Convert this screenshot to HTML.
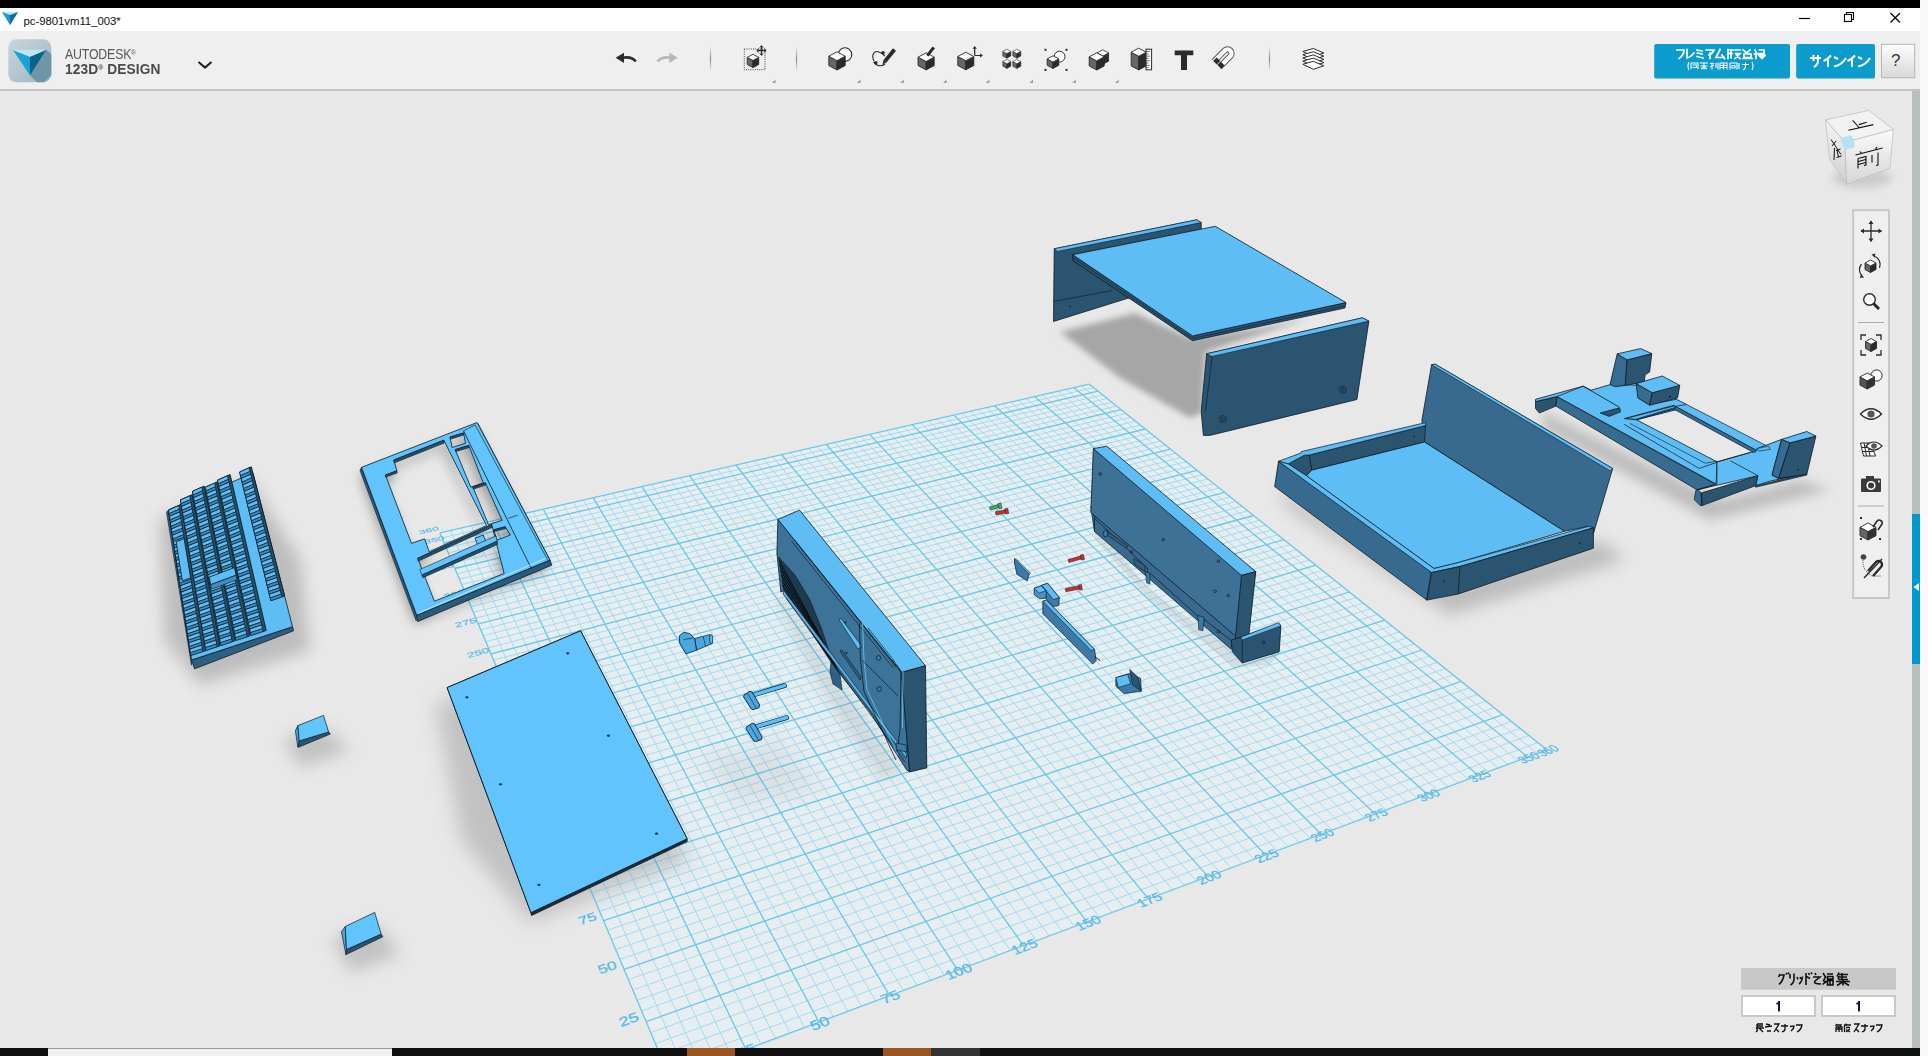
<!DOCTYPE html>
<html><head><meta charset="utf-8">
<style>
*{margin:0;padding:0;box-sizing:border-box}
html,body{width:1928px;height:1056px;overflow:hidden;background:#f8f8f8;font-family:"Liberation Sans",sans-serif}
.abs{position:absolute}
#topbar{left:0;top:0;width:1920px;height:8px;background:#000}
#title{left:0;top:8px;width:1920px;height:23px;background:#fff}
#tb{left:0;top:31px;width:1920px;height:60px;background:#efefef;border-bottom:2px solid #c4c4c4}
#vp{left:0;top:91px;width:1912px;height:957px;background:#e8e8e8;overflow:hidden}
#strip{left:1912px;top:91px;width:8px;height:957px;background:#b8c0bf}
#taskbar{left:0;top:1048px;width:1920px;height:8px;background:#111}
.txt{white-space:nowrap}
</style></head><body>
<div class="abs" id="topbar"></div>
<div class="abs" id="title">
  <svg class="abs" style="left:0;top:0" width="20" height="23" viewBox="0 0 20 23">
    <polygon points="2,4 18,4 10,17" fill="#1a9ad0"/>
    <polygon points="10,7 18,4 10,17" fill="#0f6f9a"/>
    <polygon points="2,4 18,4 10,7" fill="#bfe6f5"/>
  </svg>
  <div class="abs txt" style="left:23.5px;top:5.5px;font-size:11.4px;line-height:14px;color:#111;letter-spacing:-0.05px;">pc-9801vm11_003*</div>
  <svg class="abs" style="left:1780px;top:0" width="140" height="23" viewBox="1780 0 140 23">
    <line x1="1799" y1="10.5" x2="1810" y2="10.5" stroke="#000" stroke-width="1.2"/>
    <rect x="1844.5" y="6.5" width="7" height="7" fill="none" stroke="#000" stroke-width="1.1"/>
    <path d="M1846.5 6.5 V4.5 H1853.5 V11.5 H1851.5" fill="none" stroke="#000" stroke-width="1.1"/>
    <path d="M1890.5 5 L1900 14.5 M1900 5 L1890.5 14.5" stroke="#000" stroke-width="1.2"/>
  </svg>
</div>
<div class="abs" id="tb">
<svg class="abs" style="left:0;top:0" width="1920" height="60" viewBox="0 31 1920 60">
<defs><linearGradient id="lg1" x1="0" y1="0" x2="1" y2="1"><stop offset="0" stop-color="#c9d6dc"/><stop offset="1" stop-color="#9fb5c0"/></linearGradient>
    <linearGradient id="sepg" x1="0" y1="0" x2="0" y2="1"><stop offset="0" stop-color="#efefef"/><stop offset="0.5" stop-color="#8a8a8a"/><stop offset="1" stop-color="#efefef"/></linearGradient>
    <linearGradient id="helpg" x1="0" y1="0" x2="0" y2="1"><stop offset="0" stop-color="#fdfdfd"/><stop offset="1" stop-color="#d8d8d8"/></linearGradient></defs>
<rect x="8.3" y="39.3" width="43" height="43" rx="8" fill="url(#lg1)"/>
<polygon points="30,75.5 46.3,49.7 51.3,54 51.3,75 44,82.3 37,82.3" fill="#6f96a8"/>
<polygon points="13,50 30,56.8 30,75.5" fill="#17a3d8"/>
<polygon points="30,56.8 46.3,49.7 30,75.5" fill="#0c6388"/>
<polygon points="13,50 46.3,49.7 30,56.8" fill="#bde6f5"/>
<path d="M198.5 62 L205 67.5 L211.5 62" fill="none" stroke="#222" stroke-width="2.2"/>
<path d="M615.6 57.8 L624 52.8 L624 62.9 Z" fill="#2b2b2b"/><path d="M622 57.8 Q632 56 635.8 61.5" fill="none" stroke="#2b2b2b" stroke-width="2.6"/>
<path d="M677.8 57.8 L669.4 52.8 L669.4 62.9 Z" fill="#b8b8b8"/><path d="M671.4 57.8 Q661.4 56 657.6 61.5" fill="none" stroke="#b8b8b8" stroke-width="2.6"/>
<rect x="709.9" y="46.5" width="1.2" height="25" fill="url(#sepg)"/>
<rect x="795.9" y="46.5" width="1.2" height="25" fill="url(#sepg)"/>
<rect x="1268.9" y="46.5" width="1.2" height="25" fill="url(#sepg)"/>
<rect x="744.3" y="49" width="20.7" height="20.7" fill="none" stroke="#333" stroke-width="0.9" stroke-dasharray="1,1.2"/>
<polygon points="747.2,57.4 753.0,60.5 753.0,67.6 747.2,64.5" fill="#666" stroke="#2b2b2b" stroke-width="0.9" stroke-linejoin="round"/><polygon points="753.0,60.5 758.7,57.4 758.7,64.5 753.0,67.6" fill="#2b2b2b" stroke="#2b2b2b" stroke-width="0.9" stroke-linejoin="round"/><polygon points="747.2,57.4 753.0,54.3 758.7,57.4 753.0,60.5" fill="#fff" stroke="#2b2b2b" stroke-width="0.9" stroke-linejoin="round"/>
<path d="M761.5 46 V55 M757.2 50.5 H765.8" stroke="#2b2b2b" stroke-width="1.3"/><path d="M759.8 47.6 L761.5 45.6 L763.2 47.6 M759.8 53.4 L761.5 55.4 L763.2 53.4 M758.8 48.8 L756.8 50.5 L758.8 52.2 M764.2 48.8 L766.2 50.5 L764.2 52.2" fill="none" stroke="#2b2b2b" stroke-width="1"/>
<circle cx="845" cy="54.6" r="6.8" fill="#fff" stroke="#2b2b2b" stroke-width="1.1"/>
<polygon points="828.8,56.2 837.0,60.7 837.0,70.0 828.8,65.6" fill="#666" stroke="#2b2b2b" stroke-width="0.9" stroke-linejoin="round"/><polygon points="837.0,60.7 845.2,56.2 845.2,65.6 837.0,70.0" fill="#2b2b2b" stroke="#2b2b2b" stroke-width="0.9" stroke-linejoin="round"/><polygon points="828.8,56.2 837.0,51.8 845.2,56.2 837.0,60.7" fill="#fff" stroke="#2b2b2b" stroke-width="0.9" stroke-linejoin="round"/>
<path d="M874 61 C871 55 874 50 879 52 C882 53 884 55 885 56" fill="none" stroke="#2b2b2b" stroke-width="1.1"/><path d="M873.5 62 C876 66 881 67 885 64" fill="none" stroke="#2b2b2b" stroke-width="1.1"/>
<circle cx="883" cy="52.8" r="1.8" fill="#2b2b2b"/><circle cx="875.8" cy="62.8" r="1.8" fill="#2b2b2b"/>
<polygon points="893,48.2 896,50.8 886.5,62.5 883.5,60" fill="#2b2b2b"/><polygon points="883.5,60 886.5,62.5 882.5,64.5" fill="#2b2b2b"/>
<polygon points="918.0,57.2 926.1,61.5 926.1,69.9 918.0,65.5" fill="#666" stroke="#2b2b2b" stroke-width="0.9" stroke-linejoin="round"/><polygon points="926.1,61.5 934.2,57.2 934.2,65.5 926.1,69.9" fill="#2b2b2b" stroke="#2b2b2b" stroke-width="0.9" stroke-linejoin="round"/><polygon points="918.0,57.2 926.1,52.8 934.2,57.2 926.1,61.5" fill="#fff" stroke="#2b2b2b" stroke-width="0.9" stroke-linejoin="round"/>
<polygon points="932.5,46.5 935,48.3 928.5,56.5 926.2,54.8" fill="#2b2b2b"/>
<polygon points="957.8,56.5 965.8,60.8 965.8,69.8 957.8,65.5" fill="#666" stroke="#2b2b2b" stroke-width="0.9" stroke-linejoin="round"/><polygon points="965.8,60.8 973.8,56.5 973.8,65.5 965.8,69.8" fill="#2b2b2b" stroke="#2b2b2b" stroke-width="0.9" stroke-linejoin="round"/><polygon points="957.8,56.5 965.8,52.2 973.8,56.5 965.8,60.8" fill="#fff" stroke="#2b2b2b" stroke-width="0.9" stroke-linejoin="round"/>
<path d="M974.7 55.5 V47.5 M974.7 55.5 H981" stroke="#2b2b2b" stroke-width="1.2"/><polygon points="972.6,48.8 974.7,46 976.8,48.8" fill="#2b2b2b"/><polygon points="980,53.4 983,55.5 980,57.6" fill="#2b2b2b"/>
<polygon points="1002.8,51.4 1006.8,53.5 1006.8,58.2 1002.8,56.0" fill="#666" stroke="#2b2b2b" stroke-width="0.6" stroke-linejoin="round"/><polygon points="1006.8,53.5 1010.8,51.4 1010.8,56.0 1006.8,58.2" fill="#2b2b2b" stroke="#2b2b2b" stroke-width="0.6" stroke-linejoin="round"/><polygon points="1002.8,51.4 1006.8,49.2 1010.8,51.4 1006.8,53.5" fill="#fff" stroke="#2b2b2b" stroke-width="0.6" stroke-linejoin="round"/>
<polygon points="1012.8,51.4 1016.8,53.5 1016.8,58.2 1012.8,56.0" fill="#666" stroke="#2b2b2b" stroke-width="0.6" stroke-linejoin="round"/><polygon points="1016.8,53.5 1020.8,51.4 1020.8,56.0 1016.8,58.2" fill="#2b2b2b" stroke="#2b2b2b" stroke-width="0.6" stroke-linejoin="round"/><polygon points="1012.8,51.4 1016.8,49.2 1020.8,51.4 1016.8,53.5" fill="#fff" stroke="#2b2b2b" stroke-width="0.6" stroke-linejoin="round"/>
<polygon points="1002.8,61.6 1006.8,63.7 1006.8,68.4 1002.8,66.2" fill="#666" stroke="#2b2b2b" stroke-width="0.6" stroke-linejoin="round"/><polygon points="1006.8,63.7 1010.8,61.6 1010.8,66.2 1006.8,68.4" fill="#2b2b2b" stroke="#2b2b2b" stroke-width="0.6" stroke-linejoin="round"/><polygon points="1002.8,61.6 1006.8,59.4 1010.8,61.6 1006.8,63.7" fill="#fff" stroke="#2b2b2b" stroke-width="0.6" stroke-linejoin="round"/>
<polygon points="1012.8,61.6 1016.8,63.7 1016.8,68.4 1012.8,66.2" fill="#666" stroke="#2b2b2b" stroke-width="0.6" stroke-linejoin="round"/><polygon points="1016.8,63.7 1020.8,61.6 1020.8,66.2 1016.8,68.4" fill="#2b2b2b" stroke="#2b2b2b" stroke-width="0.6" stroke-linejoin="round"/><polygon points="1012.8,61.6 1016.8,59.4 1020.8,61.6 1016.8,63.7" fill="#fff" stroke="#2b2b2b" stroke-width="0.6" stroke-linejoin="round"/>
<rect x="1044.5" y="48.8" width="2" height="2" fill="#2b2b2b"/>
<rect x="1065.5" y="48.8" width="2" height="2" fill="#2b2b2b"/>
<rect x="1044.5" y="68.9" width="2" height="2" fill="#2b2b2b"/>
<rect x="1065.5" y="68.9" width="2" height="2" fill="#2b2b2b"/>
<circle cx="1059.6" cy="56.6" r="5.4" fill="#fff" stroke="#2b2b2b" stroke-width="1"/>
<polygon points="1047.2,58.9 1053.0,62.1 1053.0,68.4 1047.2,65.3" fill="#666" stroke="#2b2b2b" stroke-width="0.9" stroke-linejoin="round"/><polygon points="1053.0,62.1 1058.8,58.9 1058.8,65.3 1053.0,68.4" fill="#2b2b2b" stroke="#2b2b2b" stroke-width="0.9" stroke-linejoin="round"/><polygon points="1047.2,58.9 1053.0,55.8 1058.8,58.9 1053.0,62.1" fill="#fff" stroke="#2b2b2b" stroke-width="0.9" stroke-linejoin="round"/>
<polygon points="1097.0,52.9 1102.8,56.1 1102.8,64.3 1097.0,61.2" fill="#666" stroke="#2b2b2b" stroke-width="0.8" stroke-linejoin="round"/><polygon points="1102.8,56.1 1108.6,52.9 1108.6,61.2 1102.8,64.3" fill="#2b2b2b" stroke="#2b2b2b" stroke-width="0.8" stroke-linejoin="round"/><polygon points="1097.0,52.9 1102.8,49.8 1108.6,52.9 1102.8,56.1" fill="#fff" stroke="#2b2b2b" stroke-width="0.8" stroke-linejoin="round"/>
<polygon points="1089.2,56.8 1096.7,60.9 1096.7,70.0 1089.2,66.0" fill="#666" stroke="#2b2b2b" stroke-width="0.9" stroke-linejoin="round"/><polygon points="1096.7,60.9 1104.2,56.8 1104.2,66.0 1096.7,70.0" fill="#2b2b2b" stroke="#2b2b2b" stroke-width="0.9" stroke-linejoin="round"/><polygon points="1089.2,56.8 1096.7,52.8 1104.2,56.8 1096.7,60.9" fill="#fff" stroke="#2b2b2b" stroke-width="0.9" stroke-linejoin="round"/>
<polygon points="1131.2,52.2 1138.7,56.3 1138.7,69.9 1131.2,65.9" fill="#666" stroke="#2b2b2b" stroke-width="0.9" stroke-linejoin="round"/><polygon points="1138.7,56.3 1146.2,52.2 1146.2,65.9 1138.7,69.9" fill="#2b2b2b" stroke="#2b2b2b" stroke-width="0.9" stroke-linejoin="round"/><polygon points="1131.2,52.2 1138.7,48.2 1146.2,52.2 1138.7,56.3" fill="#fff" stroke="#2b2b2b" stroke-width="0.9" stroke-linejoin="round"/>
<rect x="1146" y="49.2" width="5.6" height="20.6" fill="#fff" stroke="#2b2b2b" stroke-width="1"/>
<line x1="1146" y1="51.5" x2="1149.8" y2="51.5" stroke="#2b2b2b" stroke-width="0.7"/>
<line x1="1146" y1="53.8" x2="1148.6" y2="53.8" stroke="#2b2b2b" stroke-width="0.7"/>
<line x1="1146" y1="56.1" x2="1149.8" y2="56.1" stroke="#2b2b2b" stroke-width="0.7"/>
<line x1="1146" y1="58.4" x2="1148.6" y2="58.4" stroke="#2b2b2b" stroke-width="0.7"/>
<line x1="1146" y1="60.7" x2="1149.8" y2="60.7" stroke="#2b2b2b" stroke-width="0.7"/>
<line x1="1146" y1="63.0" x2="1148.6" y2="63.0" stroke="#2b2b2b" stroke-width="0.7"/>
<line x1="1146" y1="65.3" x2="1149.8" y2="65.3" stroke="#2b2b2b" stroke-width="0.7"/>
<line x1="1146" y1="67.6" x2="1148.6" y2="67.6" stroke="#2b2b2b" stroke-width="0.7"/>
<polygon points="1174.7,50.5 1193.3,50.5 1193.3,55.2 1187,55.2 1187,70 1181,70 1181,55.2 1174.7,55.2" fill="#2b2b2b"/>
<path d="M1219.5 67 L1230.5 56 A4 4 0 0 0 1224.8 50.4 L1213.8 61.4" fill="none" stroke="#555" stroke-width="6.2" stroke-linecap="butt"/>
<path d="M1219.5 67 L1230.5 56 A4 4 0 0 0 1224.8 50.4 L1213.8 61.4" fill="none" stroke="#fff" stroke-width="4.2"/>
<polygon points="1212.2,59.8 1215.6,56.4 1219.2,60 1215.8,63.4" fill="#2b2b2b" transform="translate(1,1)"/><polygon points="1218,65.6 1221.4,62.2 1225,65.8 1221.6,69.2" fill="#2b2b2b" transform="translate(-0.5,-0.5)"/>
<polygon points="1302.8,51.5 1313.3,48.5 1323.8,53.0 1313.3,56.5" fill="#fff" stroke="#2b2b2b" stroke-width="1"/>
<polygon points="1302.8,54.7 1313.3,51.7 1323.8,56.2 1313.3,59.7" fill="#fff" stroke="#2b2b2b" stroke-width="1"/>
<polygon points="1302.8,57.9 1313.3,54.9 1323.8,59.4 1313.3,62.9" fill="#fff" stroke="#2b2b2b" stroke-width="1"/>
<polygon points="1302.8,61.1 1313.3,58.1 1323.8,62.6 1313.3,66.1" fill="#fff" stroke="#2b2b2b" stroke-width="1"/>
<polygon points="1302.8,64.3 1313.3,61.3 1323.8,65.8 1313.3,69.3" fill="#fff" stroke="#2b2b2b" stroke-width="1"/>
<polygon points="772,83 775.5,83 775.5,79.5" fill="#9a9a9a"/>
<polygon points="857,83 860.5,83 860.5,79.5" fill="#9a9a9a"/>
<polygon points="900.3,83 903.8,83 903.8,79.5" fill="#9a9a9a"/>
<polygon points="943.1,83 946.6,83 946.6,79.5" fill="#9a9a9a"/>
<polygon points="985.9,83 989.4,83 989.4,79.5" fill="#9a9a9a"/>
<polygon points="1029.5,83 1033.0,83 1033.0,79.5" fill="#9a9a9a"/>
<polygon points="1072.3,83 1075.8,83 1075.8,79.5" fill="#9a9a9a"/>
<polygon points="1115.1,83 1118.6,83 1118.6,79.5" fill="#9a9a9a"/>
<rect x="1654.2" y="44.1" width="135.8" height="34.4" rx="2" fill="#0b9bcd"/>
<rect x="1796.2" y="44.1" width="78.8" height="34.4" rx="2" fill="#0b9bcd"/>
<rect x="1881.5" y="44.3" width="33.2" height="33.4" fill="url(#helpg)" stroke="#b4b4b4" stroke-width="1"/>
</svg>
<div class="abs txt" style="left:64.5px;top:14.5px;font-size:14.2px;line-height:16px;color:#585858;transform:scaleX(0.87);transform-origin:0 0;letter-spacing:-0.2px">AUTODESK<span style="font-size:7px;vertical-align:top;position:relative;top:-1px">&#174;</span></div>
<div class="abs txt" style="left:64.5px;top:30px;font-size:14px;line-height:16px;color:#4a4a4a;font-weight:bold;letter-spacing:0.1px;transform:scaleX(0.98);transform-origin:0 0">123D<span style="font-size:7px;vertical-align:top;position:relative;top:-1px">&#174;</span> DESIGN</div>
<div class="abs txt" style="left:1891px;top:21px;font-size:17px;line-height:18px;color:#333;">?</div>
<svg class="abs" style="left:1654px;top:13px" width="225" height="35" viewBox="1654 44 225 35">
<path d="M1677 50 H1684 Q1684 55 1679 58.5" fill="none" stroke="#fff" stroke-width="1.7" stroke-linecap="square"/>
<path d="M1687 49.5 V58 Q1691 57 1694 53" fill="none" stroke="#fff" stroke-width="1.7" stroke-linecap="square"/>
<path d="M1697 50 L1702 51 M1697.5 53 L1702 54 M1697 56.5 L1703 58" fill="none" stroke="#fff" stroke-width="1.7" stroke-linecap="square"/>
<path d="M1706 50 H1714 Q1712 54 1709 55 M1710 53 V58.5" fill="none" stroke="#fff" stroke-width="1.7" stroke-linecap="square"/>
<path d="M1720 49.5 L1716 57.5 H1724 M1722 55 L1724.5 58.5" fill="none" stroke="#fff" stroke-width="1.7" stroke-linecap="square"/>
<path d="M1728 49.5 V58.5 M1728 50 H1733 M1728 53.5 H1732 M1731 50 V58 M1735 50 H1740 M1735.5 53.5 H1740 L1735 58.5 M1736.5 55 L1740 58.5" fill="none" stroke="#fff" stroke-width="1.7" stroke-linecap="square"/>
<path d="M1743 50 L1746 52.5 M1750 50 L1747 52.5 M1744 54 H1751 V57.5 H1744 Z M1743 58.5 H1752" fill="none" stroke="#fff" stroke-width="1.7" stroke-linecap="square"/>
<path d="M1755 50 L1756.5 53 M1754.5 54 H1758 M1756 54 V58.5 M1759.5 50 H1764 V53.5 H1759.5 M1759 55 H1765 M1762 53.5 V58.5 M1759.5 56 L1761 57.5 M1764.5 56 L1763 57.5" fill="none" stroke="#fff" stroke-width="1.7" stroke-linecap="square"/>
<path d="M1689 62 Q1687 66 1689 70" fill="none" stroke="#fff" stroke-width="1.1"/>
<path d="M1752 62 Q1754 66 1752 70" fill="none" stroke="#fff" stroke-width="1.1"/>
<path d="M1691 63 H1698 V69 M1691 63 V69 M1692.5 65 H1696.5 V67.5 H1692.5" fill="none" stroke="#fff" stroke-width="1.1"/>
<path d="M1700 63 H1708 M1704 63 V69.5 M1700.5 66 H1707.5 M1701 69 L1704 67 L1707 69" fill="none" stroke="#fff" stroke-width="1.1"/>
<path d="M1710 63.5 H1714 M1712 62.5 V69.5 M1710 67 L1714 65 M1716 63 V68 M1718 62.5 V69.5" fill="none" stroke="#fff" stroke-width="1.1"/>
<path d="M1720 63 H1727 V69.5 M1720 63 V69.5 M1720.5 65.5 H1726.5 M1720.5 67.5 H1726.5 M1723.5 63 V69.5" fill="none" stroke="#fff" stroke-width="1.1"/>
<path d="M1730 63 V69.5 M1730 63 H1737 V69.5 M1732 65.5 H1735 V68 H1732 Z" fill="none" stroke="#fff" stroke-width="1.1"/>
<path d="M1739 63 V69 M1742 64.5 H1749 M1745.5 62.5 V66 Q1745.5 69 1743 70" fill="none" stroke="#fff" stroke-width="1.1"/>
<path d="M1810 58 H1821 M1813.5 55 V61 M1818 55 V60 Q1818 65 1814 67" fill="none" stroke="#fff" stroke-width="2"/>
<path d="M1831 55.5 Q1828 59 1823.5 61 M1828 59 V67" fill="none" stroke="#fff" stroke-width="2"/>
<path d="M1834 57 L1838 59 M1834 66.5 Q1842 65 1846 58" fill="none" stroke="#fff" stroke-width="2"/>
<path d="M1855 55.5 Q1852 59 1847.5 61 M1852 59 V67" fill="none" stroke="#fff" stroke-width="2"/>
<path d="M1858 57 L1862 59 M1858 66.5 Q1866 65 1870 58" fill="none" stroke="#fff" stroke-width="2"/>
</svg>
</div>
<div class="abs" id="vp"><svg class="abs" style="left:0;top:-91px" width="1912" height="1139" viewBox="0 0 1912 1139">
<polygon points="669.9,1077.9 1546.8,749.8 1089.0,384.1 439.9,532.9" fill="#e6eef1"/>
<g stroke="#a6daee" stroke-width="1"><line x1="685.4" y1="1072.1" x2="450.5" y2="530.5"/><line x1="665.1" y1="1066.3" x2="1537.8" y2="742.6"/><line x1="700.6" y1="1066.4" x2="461.0" y2="528.1"/><line x1="660.2" y1="1054.9" x2="1528.9" y2="735.4"/><line x1="715.8" y1="1060.7" x2="471.4" y2="525.7"/><line x1="655.5" y1="1043.7" x2="1520.1" y2="728.4"/><line x1="730.9" y1="1055.1" x2="481.9" y2="523.3"/><line x1="650.8" y1="1032.6" x2="1511.4" y2="721.5"/><line x1="760.7" y1="1043.9" x2="502.5" y2="518.5"/><line x1="641.7" y1="1010.9" x2="1494.3" y2="707.8"/><line x1="775.4" y1="1038.4" x2="512.8" y2="516.2"/><line x1="637.2" y1="1000.3" x2="1485.9" y2="701.1"/><line x1="790.1" y1="1033.0" x2="523.0" y2="513.8"/><line x1="632.8" y1="989.9" x2="1477.6" y2="694.4"/><line x1="804.6" y1="1027.5" x2="533.2" y2="511.5"/><line x1="628.4" y1="979.6" x2="1469.3" y2="687.9"/><line x1="833.3" y1="1016.8" x2="553.4" y2="506.9"/><line x1="619.9" y1="959.4" x2="1453.2" y2="674.9"/><line x1="847.6" y1="1011.4" x2="563.4" y2="504.6"/><line x1="615.7" y1="949.5" x2="1445.2" y2="668.6"/><line x1="861.7" y1="1006.2" x2="573.4" y2="502.3"/><line x1="611.6" y1="939.7" x2="1437.3" y2="662.3"/><line x1="875.7" y1="1000.9" x2="583.3" y2="500.0"/><line x1="607.6" y1="930.1" x2="1429.6" y2="656.1"/><line x1="903.4" y1="990.5" x2="603.0" y2="495.5"/><line x1="599.6" y1="911.3" x2="1414.3" y2="643.9"/><line x1="917.1" y1="985.4" x2="612.8" y2="493.2"/><line x1="595.7" y1="902.0" x2="1406.7" y2="637.9"/><line x1="930.8" y1="980.3" x2="622.6" y2="491.0"/><line x1="591.9" y1="892.9" x2="1399.3" y2="631.9"/><line x1="944.3" y1="975.2" x2="632.3" y2="488.8"/><line x1="588.1" y1="883.9" x2="1391.9" y2="626.0"/><line x1="971.0" y1="965.2" x2="651.6" y2="484.4"/><line x1="580.6" y1="866.3" x2="1377.4" y2="614.5"/><line x1="984.3" y1="960.3" x2="661.1" y2="482.2"/><line x1="577.0" y1="857.7" x2="1370.3" y2="608.8"/><line x1="997.4" y1="955.4" x2="670.7" y2="480.0"/><line x1="573.4" y1="849.1" x2="1363.2" y2="603.1"/><line x1="1010.5" y1="950.5" x2="680.1" y2="477.8"/><line x1="569.8" y1="840.7" x2="1356.2" y2="597.5"/><line x1="1036.4" y1="940.8" x2="699.0" y2="473.5"/><line x1="562.8" y1="824.2" x2="1342.5" y2="586.5"/><line x1="1049.2" y1="936.0" x2="708.3" y2="471.3"/><line x1="559.4" y1="816.0" x2="1335.7" y2="581.1"/><line x1="1061.9" y1="931.2" x2="717.6" y2="469.2"/><line x1="556.0" y1="808.0" x2="1329.0" y2="575.8"/><line x1="1074.5" y1="926.5" x2="726.9" y2="467.1"/><line x1="552.7" y1="800.1" x2="1322.4" y2="570.5"/><line x1="1099.5" y1="917.2" x2="745.3" y2="462.9"/><line x1="546.1" y1="784.6" x2="1309.3" y2="560.0"/><line x1="1111.9" y1="912.5" x2="754.4" y2="460.8"/><line x1="542.9" y1="777.0" x2="1302.8" y2="554.9"/><line x1="1124.2" y1="907.9" x2="763.5" y2="458.7"/><line x1="539.7" y1="769.4" x2="1296.5" y2="549.8"/><line x1="1136.4" y1="903.4" x2="772.6" y2="456.6"/><line x1="536.6" y1="762.0" x2="1290.1" y2="544.7"/><line x1="1160.5" y1="894.3" x2="790.6" y2="452.5"/><line x1="530.4" y1="747.3" x2="1277.7" y2="534.8"/><line x1="1172.5" y1="889.8" x2="799.5" y2="450.4"/><line x1="527.4" y1="740.2" x2="1271.6" y2="529.9"/><line x1="1184.4" y1="885.4" x2="808.4" y2="448.4"/><line x1="524.4" y1="733.1" x2="1265.5" y2="525.0"/><line x1="1196.2" y1="881.0" x2="817.3" y2="446.4"/><line x1="521.4" y1="726.0" x2="1259.5" y2="520.2"/><line x1="1219.6" y1="872.2" x2="834.9" y2="442.3"/><line x1="515.6" y1="712.3" x2="1247.6" y2="510.8"/><line x1="1231.2" y1="867.9" x2="843.6" y2="440.3"/><line x1="512.7" y1="705.5" x2="1241.8" y2="506.1"/><line x1="1242.7" y1="863.6" x2="852.3" y2="438.3"/><line x1="509.9" y1="698.8" x2="1236.0" y2="501.5"/><line x1="1254.1" y1="859.3" x2="861.0" y2="436.3"/><line x1="507.1" y1="692.2" x2="1230.2" y2="496.9"/><line x1="1276.8" y1="850.8" x2="878.2" y2="432.4"/><line x1="501.6" y1="679.1" x2="1218.9" y2="487.9"/><line x1="1288.0" y1="846.6" x2="886.7" y2="430.4"/><line x1="498.9" y1="672.7" x2="1213.4" y2="483.4"/><line x1="1299.1" y1="842.5" x2="895.3" y2="428.5"/><line x1="496.2" y1="666.4" x2="1207.8" y2="479.0"/><line x1="1310.2" y1="838.3" x2="903.7" y2="426.5"/><line x1="493.6" y1="660.1" x2="1202.4" y2="474.6"/><line x1="1332.1" y1="830.1" x2="920.6" y2="422.7"/><line x1="488.4" y1="647.8" x2="1191.6" y2="466.0"/><line x1="1343.0" y1="826.0" x2="928.9" y2="420.8"/><line x1="485.8" y1="641.7" x2="1186.2" y2="461.7"/><line x1="1353.8" y1="822.0" x2="937.3" y2="418.8"/><line x1="483.3" y1="635.7" x2="1181.0" y2="457.5"/><line x1="1364.5" y1="818.0" x2="945.6" y2="416.9"/><line x1="480.8" y1="629.8" x2="1175.7" y2="453.3"/><line x1="1385.8" y1="810.0" x2="962.0" y2="413.2"/><line x1="475.9" y1="618.1" x2="1165.4" y2="445.1"/><line x1="1396.3" y1="806.1" x2="970.2" y2="411.3"/><line x1="473.4" y1="612.4" x2="1160.3" y2="441.0"/><line x1="1406.8" y1="802.2" x2="978.4" y2="409.4"/><line x1="471.0" y1="606.7" x2="1155.3" y2="437.0"/><line x1="1417.2" y1="798.3" x2="986.5" y2="407.6"/><line x1="468.7" y1="601.1" x2="1150.3" y2="433.0"/><line x1="1437.8" y1="790.6" x2="1002.6" y2="403.9"/><line x1="464.0" y1="590.0" x2="1140.4" y2="425.1"/><line x1="1448.0" y1="786.7" x2="1010.7" y2="402.0"/><line x1="461.7" y1="584.5" x2="1135.5" y2="421.2"/><line x1="1458.2" y1="782.9" x2="1018.6" y2="400.2"/><line x1="459.4" y1="579.1" x2="1130.7" y2="417.4"/><line x1="1468.3" y1="779.2" x2="1026.6" y2="398.4"/><line x1="457.1" y1="573.8" x2="1125.9" y2="413.5"/><line x1="1488.2" y1="771.7" x2="1042.4" y2="394.7"/><line x1="452.7" y1="563.2" x2="1116.4" y2="406.0"/><line x1="1498.2" y1="768.0" x2="1050.2" y2="392.9"/><line x1="450.5" y1="558.1" x2="1111.8" y2="402.2"/><line x1="1508.0" y1="764.3" x2="1058.1" y2="391.2"/><line x1="448.3" y1="552.9" x2="1107.1" y2="398.5"/><line x1="1517.8" y1="760.6" x2="1065.8" y2="389.4"/><line x1="446.2" y1="547.8" x2="1102.5" y2="394.9"/><line x1="1537.2" y1="753.4" x2="1081.3" y2="385.8"/><line x1="442.0" y1="537.8" x2="1093.5" y2="387.6"/></g>
<g stroke="#6cc6e9" stroke-width="1.3"><line x1="669.9" y1="1077.9" x2="439.9" y2="532.9"/><line x1="669.9" y1="1077.9" x2="1546.8" y2="749.8"/><line x1="745.9" y1="1049.5" x2="492.2" y2="520.9"/><line x1="646.2" y1="1021.7" x2="1502.8" y2="714.6"/><line x1="819.0" y1="1022.1" x2="543.3" y2="509.2"/><line x1="624.1" y1="969.4" x2="1461.2" y2="681.4"/><line x1="889.6" y1="995.7" x2="593.2" y2="497.7"/><line x1="603.6" y1="920.6" x2="1421.9" y2="650.0"/><line x1="957.7" y1="970.2" x2="641.9" y2="486.6"/><line x1="584.3" y1="875.1" x2="1384.6" y2="620.2"/><line x1="1023.5" y1="945.6" x2="689.6" y2="475.6"/><line x1="566.3" y1="832.4" x2="1349.3" y2="592.0"/><line x1="1087.0" y1="921.8" x2="736.1" y2="465.0"/><line x1="549.4" y1="792.3" x2="1315.8" y2="565.2"/><line x1="1148.5" y1="898.8" x2="781.6" y2="454.5"/><line x1="533.5" y1="754.6" x2="1283.9" y2="539.7"/><line x1="1207.9" y1="876.6" x2="826.1" y2="444.3"/><line x1="518.5" y1="719.1" x2="1253.5" y2="515.5"/><line x1="1265.5" y1="855.0" x2="869.6" y2="434.4"/><line x1="504.3" y1="685.6" x2="1224.6" y2="492.3"/><line x1="1321.2" y1="834.2" x2="912.2" y2="424.6"/><line x1="491.0" y1="653.9" x2="1196.9" y2="470.3"/><line x1="1375.2" y1="814.0" x2="953.8" y2="415.1"/><line x1="478.3" y1="623.9" x2="1170.5" y2="449.2"/><line x1="1427.5" y1="794.4" x2="994.6" y2="405.7"/><line x1="466.3" y1="595.5" x2="1145.3" y2="429.0"/><line x1="1478.3" y1="775.4" x2="1034.5" y2="396.6"/><line x1="454.9" y1="568.5" x2="1121.1" y2="409.7"/><line x1="1527.5" y1="757.0" x2="1073.6" y2="387.6"/><line x1="444.1" y1="542.8" x2="1098.0" y2="391.2"/><line x1="1546.8" y1="749.8" x2="1089.0" y2="384.1"/><line x1="439.9" y1="532.9" x2="1089.0" y2="384.1"/></g>
<g fill="#55bbe8" stroke="#55bbe8" stroke-width="1.2" style="font-family:&quot;Liberation Sans&quot;,sans-serif"><text transform="matrix(0.29843 -0.11188 0.10821 0.22553 746.9 1051.8)" x="0" y="15" font-size="56.0" text-anchor="middle">25</text><text transform="matrix(0.30084 -0.10732 0.08893 0.21637 629.1 1020.3)" x="0" y="15" font-size="56.0" text-anchor="middle">25</text><text transform="matrix(0.28773 -0.10786 0.11689 0.21746 820.2 1024.3)" x="0" y="15" font-size="56.0" text-anchor="middle">50</text><text transform="matrix(0.29182 -0.09993 0.08283 0.20151 607.6 968.1)" x="0" y="15" font-size="56.0" text-anchor="middle">50</text><text transform="matrix(0.27759 -0.10406 0.12488 0.20982 890.8 997.8)" x="0" y="15" font-size="56.0" text-anchor="middle">75</text><text transform="matrix(0.28332 -0.09328 0.07733 0.18814 587.6 919.5)" x="0" y="15" font-size="56.0" text-anchor="middle">75</text><text transform="matrix(0.26797 -0.10046 0.13225 0.20257 959.0 972.2)" x="0" y="15" font-size="56.0" text-anchor="middle">100</text><text transform="matrix(0.27529 -0.08727 0.07236 0.17605 568.9 874.0)" x="0" y="15" font-size="56.0" text-anchor="middle">100</text><text transform="matrix(0.25885 -0.09704 0.13905 0.19570 1024.9 947.6)" x="0" y="15" font-size="56.0" text-anchor="middle">125</text><text transform="matrix(0.26769 -0.08182 0.06786 0.16509 551.4 831.3)" x="0" y="15" font-size="56.0" text-anchor="middle">125</text><text transform="matrix(0.25018 -0.09379 0.14531 0.18917 1088.5 923.7)" x="0" y="15" font-size="56.0" text-anchor="middle">150</text><text transform="matrix(0.26049 -0.07686 0.06376 0.15513 535.0 791.3)" x="0" y="15" font-size="56.0" text-anchor="middle">150</text><text transform="matrix(0.24195 -0.09070 0.15109 0.18296 1150.0 900.7)" x="0" y="15" font-size="56.0" text-anchor="middle">175</text><text transform="matrix(0.25366 -0.07235 0.06003 0.14604 519.5 753.7)" x="0" y="15" font-size="56.0" text-anchor="middle">175</text><text transform="matrix(0.23411 -0.08776 0.15641 0.17705 1209.5 878.3)" x="0" y="15" font-size="56.0" text-anchor="middle">200</text><text transform="matrix(0.24717 -0.06821 0.05661 0.13772 504.9 718.3)" x="0" y="15" font-size="56.0" text-anchor="middle">200</text><text transform="matrix(0.22665 -0.08497 0.16132 0.17142 1267.1 856.8)" x="0" y="15" font-size="56.0" text-anchor="middle">225</text><text transform="matrix(0.24100 -0.06442 0.05348 0.13010 491.2 684.8)" x="0" y="15" font-size="56.0" text-anchor="middle">225</text><text transform="matrix(0.21954 -0.08230 0.16583 0.16606 1322.9 835.9)" x="0" y="15" font-size="56.0" text-anchor="middle">250</text><text transform="matrix(0.23513 -0.06094 0.05059 0.12309 478.2 653.2)" x="0" y="15" font-size="56.0" text-anchor="middle">250</text><text transform="matrix(0.21276 -0.07976 0.17000 0.16095 1376.9 815.6)" x="0" y="15" font-size="56.0" text-anchor="middle">275</text><text transform="matrix(0.22954 -0.05773 0.04794 0.11664 465.8 623.2)" x="0" y="15" font-size="56.0" text-anchor="middle">275</text><text transform="matrix(0.20628 -0.07733 0.17383 0.15607 1429.3 796.0)" x="0" y="15" font-size="56.0" text-anchor="middle">300</text><text transform="matrix(0.22420 -0.05477 0.04549 0.11068 454.2 594.8)" x="0" y="15" font-size="56.0" text-anchor="middle">300</text><text transform="matrix(0.20010 -0.07502 0.17735 0.15141 1480.1 776.9)" x="0" y="15" font-size="56.0" text-anchor="middle">325</text><text transform="matrix(0.21910 -0.05203 0.04322 0.10516 443.1 567.8)" x="0" y="15" font-size="56.0" text-anchor="middle">325</text><text transform="matrix(0.19420 -0.07280 0.18059 0.14695 1529.3 758.4)" x="0" y="15" font-size="56.0" text-anchor="middle">350</text><text transform="matrix(0.21376 -0.04932 0.04123 0.09970 434.4 540.4)" x="0" y="15" font-size="56.0" text-anchor="middle">350</text><text transform="matrix(0.19191 -0.07194 0.18181 0.14523 1548.6 751.2)" x="0" y="15" font-size="56.0" text-anchor="middle">360</text><text transform="matrix(0.21198 -0.04837 0.04029 0.09780 428.8 530.7)" x="0" y="15" font-size="56.0" text-anchor="middle">360</text></g>
<defs><filter id="b2" x="-50%" y="-50%" width="200%" height="200%"><feGaussianBlur stdDeviation="2"/></filter><filter id="b3" x="-50%" y="-50%" width="200%" height="200%"><feGaussianBlur stdDeviation="3"/></filter><filter id="b4" x="-50%" y="-50%" width="200%" height="200%"><feGaussianBlur stdDeviation="4"/></filter><filter id="b6" x="-50%" y="-50%" width="200%" height="200%"><feGaussianBlur stdDeviation="6"/></filter><filter id="b8" x="-50%" y="-50%" width="200%" height="200%"><feGaussianBlur stdDeviation="8"/></filter><filter id="b10" x="-50%" y="-50%" width="200%" height="200%"><feGaussianBlur stdDeviation="10"/></filter><filter id="b12" x="-50%" y="-50%" width="200%" height="200%"><feGaussianBlur stdDeviation="12"/></filter><filter id="b16" x="-50%" y="-50%" width="200%" height="200%"><feGaussianBlur stdDeviation="16"/></filter></defs>
<path d="M361.5,467.3 L477.1,422.5 L550.0,560.0 L416.7,615.2 Z M385.4,475.0 L396.9,470.8 L393.8,460.0 L443.8,440.2 L486.5,525.6 L429.2,551.7 L424.6,538.8 L411.5,543.3 Z M417.7,558.3 L491.7,524.6 L504.2,573.5 L434.4,601.2 Z M450.0,437.1 L463.5,432.9 L465.6,443.3 L452.1,447.5 Z M455.2,449.6 L468.8,445.4 L483.3,482.9 L470.8,487.1 Z M472.9,487.1 L485.4,482.9 L502.1,520.4 L488.5,524.6 Z M493.8,529.8 L505.2,526.7 L510.4,535.0 L496.9,540.2 Z M475.0,538.1 L483.3,535.0 L486.5,543.3 L478.1,546.5 Z " fill="#000" opacity="0.32" fill-rule="evenodd" transform="translate(-2,9)" filter="url(#b6)"/>
<polygon points="1060.0,332.0 1135.0,313.0 1190.0,338.0 1262.0,328.0 1310.0,318.0 1206.0,352.0 1202.0,413.0 1190.0,418.0 1120.0,378.0" fill="#a6a6a6" opacity="1.0" filter="url(#b3)"/>
<polygon points="160.0,520.0 250.0,480.0 300.0,560.0 310.0,650.0 200.0,685.0 165.0,640.0" fill="#888" opacity="0.45" filter="url(#b8)"/>
<polygon points="436.0,705.0 560.0,655.0 690.0,860.0 530.0,922.0 462.0,840.0" fill="#888" opacity="0.4" filter="url(#b10)"/>
<polygon points="284.0,738.0 325.0,728.0 350.0,750.0 300.0,768.0" fill="#888" opacity="0.4" filter="url(#b8)"/>
<polygon points="332.0,938.0 378.0,925.0 400.0,955.0 350.0,972.0" fill="#888" opacity="0.4" filter="url(#b8)"/>
<polygon points="1275.0,485.0 1430.0,590.0 1600.0,540.0 1625.0,560.0 1450.0,615.0 1290.0,510.0" fill="#888" opacity="0.45" filter="url(#b8)"/>
<polygon points="1540.0,410.0 1560.0,420.0 1720.0,500.0 1800.0,480.0 1830.0,490.0 1710.0,520.0 1545.0,430.0" fill="#888" opacity="0.45" filter="url(#b6)"/>
<polygon points="700.0,760.0 780.0,740.0 820.0,790.0 740.0,805.0" fill="#888" opacity="0.12" filter="url(#b10)"/>
<polygon points="1095.0,525.0 1150.0,590.0 1235.0,652.0 1280.0,652.0 1270.0,665.0 1235.0,668.0 1150.0,600.0 1095.0,540.0" fill="#888" opacity="0.15" filter="url(#b5)"/>
<polygon points="782.0,590.0 835.0,675.0 880.0,735.0 905.0,772.0 880.0,780.0 830.0,705.0 778.0,605.0" fill="#888" opacity="0.2" filter="url(#b6)"/>
<polygon points="1054.2,248.8 1196.8,219.8 1201.2,222.6 1201.2,275.3 1053.5,321.5" fill="#2b5470" stroke="#0d1a24" stroke-width="0.8" stroke-linejoin="round"/>
<polygon points="1054.2,248.8 1196.8,219.8 1201.2,222.6 1057.4,251.4" fill="#5ebdf5" stroke="#0d1a24" stroke-width="0.6" stroke-linejoin="round"/>
<polyline points="1053.5,301.5 1111.9,290.6" fill="none" stroke="#0d1a24" stroke-width="0.6"/>
<circle cx="1070.1" cy="306.5" r="0.8" fill="#0d1a24"/>
<polygon points="1072.7,254.7 1192.5,335.9 1346.0,302.6 1344.9,308.0 1192.5,340.7 1072.7,260.5" fill="#2b5470" stroke="#0d1a24" stroke-width="0.8" stroke-linejoin="round"/>
<polygon points="1072.7,254.7 1215.3,226.3 1346.0,302.6 1192.5,335.9" fill="#5ebdf5" stroke="#0d1a24" stroke-width="0.8" stroke-linejoin="round"/>
<polyline points="1072.7,257.5 1192.5,338.5 1344.9,305.8" fill="none" stroke="#0d1a24" stroke-width="0.6"/>
<polygon points="1206.6,353.8 1362.4,317.8 1368.9,321.1 1356.9,399.5 1209.9,435.4 1203.4,435.4 1201.2,411.5" fill="#2b5470" stroke="#0d1a24" stroke-width="0.8" stroke-linejoin="round"/>
<polygon points="1206.6,353.8 1362.4,317.8 1368.9,321.1 1212.1,356.4" fill="#5ebdf5" stroke="#0d1a24" stroke-width="0.6" stroke-linejoin="round"/>
<polyline points="1212.1,356.4 1205.5,411.5" fill="none" stroke="#0d1a24" stroke-width="0.6"/>
<circle cx="1223.0" cy="419.1" r="3.5" fill="#2b5470" stroke="#0d1a24" stroke-width="0.6"/><circle cx="1223.0" cy="419.1" r="1.5" fill="none" stroke="#0d1a24" stroke-width="0.6"/>
<circle cx="1342.8" cy="389.7" r="3.5" fill="#2b5470" stroke="#0d1a24" stroke-width="0.6"/><circle cx="1342.8" cy="389.7" r="1.5" fill="none" stroke="#0d1a24" stroke-width="0.6"/>
<polygon points="1090.8,506.5 1241.0,634.5 1233.6,640.0 1231.2,649.3 1094.5,531.6" fill="#39698c" stroke="#0d1a24" stroke-width="0.8" stroke-linejoin="round"/>
<polyline points="1094.5,531.6 1094.5,513.9" fill="none" stroke="#0d1a24" stroke-width="0.7"/>
<polygon points="1093.3,448.6 1255.8,571.7 1241.0,640.7 1090.8,512.6" fill="#3d7196" stroke="#0d1a24" stroke-width="0.8" stroke-linejoin="round"/>
<polyline points="1094.5,518.3 1147.4,568.0 1147.4,582.8" fill="none" stroke="#0d1a24" stroke-width="0.7"/>
<polyline points="1149.9,573.0 1199.2,617.3 1200.4,629.6" fill="none" stroke="#0d1a24" stroke-width="0.7"/>
<polyline points="1202.9,618.5 1232.4,641.4" fill="none" stroke="#0d1a24" stroke-width="0.7"/>
<polygon points="1145.5,571.7 1149.9,573.0 1149.9,584.1 1146.5,582.8" fill="#3a7aa8" stroke="#0d1a24" stroke-width="0.6" stroke-linejoin="round"/>
<polygon points="1197.9,615.3 1204.1,617.3 1202.9,630.8 1198.7,629.6" fill="#3a7aa8" stroke="#0d1a24" stroke-width="0.6" stroke-linejoin="round"/>
<polygon points="1108.0,531.6 1127.7,545.9 1126.5,548.3 1106.8,534.8" fill="#2f5f80" stroke="#0d1a24" stroke-width="0.6" stroke-linejoin="round"/>
<polygon points="1133.9,558.2 1145.0,565.6 1145.0,571.7 1134.6,564.4" fill="#2f5f80" stroke="#0d1a24" stroke-width="0.6" stroke-linejoin="round"/>
<ellipse cx="1105.6" cy="533.6" rx="2.2" ry="3.5" fill="#3a7aa8" stroke="#0d1a24" stroke-width="0.7"/>
<polygon points="1093.3,448.6 1106.8,446.2 1255.8,571.7 1241.5,575.4" fill="#5ebdf5" stroke="#0d1a24" stroke-width="0.8" stroke-linejoin="round"/>
<polygon points="1241.5,575.4 1255.8,571.7 1248.4,639.0 1234.9,643.2" fill="#2b5470" stroke="#0d1a24" stroke-width="0.8" stroke-linejoin="round"/>
<polygon points="1231.2,640.0 1241.0,637.0 1279.2,623.5 1280.9,625.9 1279.2,651.8 1242.3,662.9 1232.4,651.8" fill="#2b5470" stroke="#0d1a24" stroke-width="0.8" stroke-linejoin="round"/>
<polygon points="1241.0,637.0 1278.4,622.7 1280.9,625.9 1242.3,640.0" fill="#5ebdf5" stroke="#0d1a24" stroke-width="0.6" stroke-linejoin="round"/>
<polyline points="1242.3,640.0 1242.3,662.9" fill="none" stroke="#0d1a24" stroke-width="0.6"/>
<circle cx="1100.2" cy="474.0" r="1.3" fill="none" stroke="#0d1a24" stroke-width="0.7"/>
<circle cx="1163.2" cy="539.5" r="1.3" fill="none" stroke="#0d1a24" stroke-width="0.7"/>
<circle cx="1218.4" cy="561.2" r="1.3" fill="none" stroke="#0d1a24" stroke-width="0.7"/>
<circle cx="1215.2" cy="591.4" r="1.3" fill="none" stroke="#0d1a24" stroke-width="0.7"/>
<circle cx="1228.2" cy="595.6" r="1.3" fill="none" stroke="#0d1a24" stroke-width="0.7"/>
<circle cx="1263.7" cy="642.4" r="1.3" fill="none" stroke="#0d1a24" stroke-width="0.7"/>
<circle cx="1218.4" cy="631.6" r="1.3" fill="none" stroke="#0d1a24" stroke-width="0.7"/>
<circle cx="1131.4" cy="552.0" r="1.3" fill="none" stroke="#0d1a24" stroke-width="0.7"/>
<polygon points="1431.6,364.7 1435.2,364.2 1612.7,468.5 1593.4,533.7 1588.5,526.4 1564.4,531.3 1424.4,441.9 1421.9,420.2" fill="#376a8e" stroke="#0d1a24" stroke-width="0.8" stroke-linejoin="round"/>
<polygon points="1431.6,364.7 1435.2,364.2 1612.7,468.5 1610.3,470.9" fill="#5ebdf5" stroke="#0d1a24" stroke-width="0.6" stroke-linejoin="round"/>
<polygon points="1278.5,461.3 1431.6,568.7 1426.8,600.1 1274.7,486.6" fill="#376a8e" stroke="#0d1a24" stroke-width="0.8" stroke-linejoin="round"/>
<polygon points="1306.4,475.8 1311.5,470.1 1424.4,441.9 1564.4,531.3 1458.2,562.6 1434.0,568.5" fill="#5ebdf5" stroke="#0d1a24" stroke-width="0.8" stroke-linejoin="round"/>
<polygon points="1309.2,455.0 1425.6,425.5 1424.4,441.9 1311.5,470.1" fill="#2b5470" stroke="#0d1a24" stroke-width="0.7" stroke-linejoin="round"/>
<polygon points="1288.2,463.9 1304.1,455.3 1309.2,455.0 1311.5,470.1 1306.4,475.8" fill="#2b5470" stroke="#0d1a24" stroke-width="0.7" stroke-linejoin="round"/>
<polygon points="1278.5,461.3 1300.7,453.1 1301.3,451.6 1425.6,422.6 1425.6,425.5 1309.2,455.0 1304.1,455.3 1288.2,463.9" fill="#5ebdf5" stroke="#0d1a24" stroke-width="0.7" stroke-linejoin="round"/>
<polygon points="1278.5,461.3 1288.2,463.9 1306.4,475.8 1434.0,568.5 1458.2,562.6 1588.5,526.4 1593.4,527.8 1460.0,566.5 1431.6,572.5" fill="#5ebdf5" stroke="#0d1a24" stroke-width="0.7" stroke-linejoin="round"/>
<polygon points="1431.6,572.5 1460.0,566.5 1593.4,527.8 1593.4,548.2 1458.2,594.0 1426.8,600.1" fill="#2b5470" stroke="#0d1a24" stroke-width="0.8" stroke-linejoin="round"/>
<polyline points="1460.0,566.5 1458.2,594.0" fill="none" stroke="#0d1a24" stroke-width="0.7"/>
<circle cx="1414.2" cy="436.6" r="0.8" fill="#0d1a24"/>
<circle cx="1443.7" cy="581.2" r="0.8" fill="#0d1a24"/>
<circle cx="1579.6" cy="543.3" r="0.8" fill="#0d1a24"/>
<polygon points="447.1,687.6 580.6,630.8 687.2,838.8 687.2,841.5 531.5,915.5 530.9,912.7" fill="#1d2d38" stroke="#0d1a24" stroke-width="0.8" stroke-linejoin="round"/>
<polygon points="447.1,687.6 580.6,630.8 687.2,838.8 530.9,912.7" fill="#62c4fc" stroke="#0d1a24" stroke-width="0.9" stroke-linejoin="round"/>
<ellipse cx="466.9" cy="697.3" rx="1.6" ry="1.1" fill="#1a2a35"/>
<ellipse cx="567.8" cy="653.3" rx="1.6" ry="1.1" fill="#1a2a35"/>
<ellipse cx="608.5" cy="735.7" rx="1.6" ry="1.1" fill="#1a2a35"/>
<ellipse cx="500.5" cy="784.3" rx="1.6" ry="1.1" fill="#1a2a35"/>
<ellipse cx="656.5" cy="833.7" rx="1.6" ry="1.1" fill="#1a2a35"/>
<ellipse cx="538.9" cy="884.9" rx="1.6" ry="1.1" fill="#1a2a35"/>
<polygon points="295.4,730.7 297.9,725.6 299.2,740.9 297.9,747.3" fill="#4aa6dc" stroke="#0d1a24" stroke-width="0.7" stroke-linejoin="round"/>
<polygon points="299.2,740.9 328.6,732.0 330.4,734.0 298.4,747.3" fill="#2b5470" stroke="#0d1a24" stroke-width="0.7" stroke-linejoin="round"/>
<polygon points="297.9,725.6 323.5,715.4 328.6,732.0 299.2,740.9" fill="#62c4fc" stroke="#0d1a24" stroke-width="0.7" stroke-linejoin="round"/>
<polygon points="341.4,931.6 345.3,926.5 346.5,949.5 346.0,954.6" fill="#4aa6dc" stroke="#0d1a24" stroke-width="0.7" stroke-linejoin="round"/>
<polygon points="346.5,949.5 381.1,934.1 382.9,936.7 346.0,954.6" fill="#2b5470" stroke="#0d1a24" stroke-width="0.7" stroke-linejoin="round"/>
<polygon points="345.3,926.5 374.7,912.4 381.1,934.1 346.5,949.5" fill="#62c4fc" stroke="#0d1a24" stroke-width="0.7" stroke-linejoin="round"/>
<polygon points="694.6,638.5 710.0,634.5 712.5,643.4 696.5,650.2" fill="#4aa8e0" stroke="#0d1a24" stroke-width="0.7" stroke-linejoin="round"/>
<ellipse cx="711.2" cy="639.1" rx="1.6" ry="4.6" fill="#5ebdf5" stroke="#0d1a24" stroke-width="0.7"/>
<polyline points="703.2,636.6 705.7,646.5" fill="none" stroke="#0d1a24" stroke-width="0.6"/>
<polygon points="679.2,636.0 683.5,632.3 689.7,633.5 694.6,638.5 696.5,650.2 686.0,653.9 679.8,643.4" fill="#4aa8e0" stroke="#0d1a24" stroke-width="0.8" stroke-linejoin="round"/>
<polyline points="683.5,639.7 693.4,637.9" fill="none" stroke="#0d1a24" stroke-width="0.6"/>
<line x1="754.9" y1="694.5" x2="784.5" y2="685.6" stroke="#0d1a24" stroke-width="4.8" stroke-linecap="round"/>
<line x1="754.9" y1="694.5" x2="784.5" y2="685.6" stroke="#5ebdf5" stroke-width="3.6" stroke-linecap="round"/>
<line x1="756.8" y1="726.5" x2="786.7" y2="717.6" stroke="#0d1a24" stroke-width="4.8" stroke-linecap="round"/>
<line x1="756.8" y1="726.5" x2="786.7" y2="717.6" stroke="#5ebdf5" stroke-width="3.6" stroke-linecap="round"/>
<polygon points="743.9,695.1 750.0,691.2 752.2,692.0 759.6,704.9 758.9,707.7 753.1,709.6 751.3,708.9 743.6,696.9" fill="#4aa8e0" stroke="#0d1a24" stroke-width="0.9" stroke-linejoin="round"/>
<polygon points="746.3,727.1 752.5,723.2 754.7,724.0 762.1,737.0 761.3,739.7 755.6,741.6 753.7,740.9 746.1,728.9" fill="#4aa8e0" stroke="#0d1a24" stroke-width="0.9" stroke-linejoin="round"/>
<polyline points="747.6,693.6 756.2,708.0" fill="none" stroke="#0d1a24" stroke-width="0.6"/>
<polyline points="750.0,725.6 758.6,740.0" fill="none" stroke="#0d1a24" stroke-width="0.6"/>
<polygon points="990.3,510.1 998.9,507.7 998.1,504.7 989.5,507.1" fill="#3cb84a" stroke="#0d1a24" stroke-width="0.5" stroke-linejoin="round"/>
<polygon points="999.2,508.7 1002.1,507.9 1000.7,502.9 997.8,503.7" fill="#3cb84a" stroke="#0d1a24" stroke-width="0.5" stroke-linejoin="round"/>
<polygon points="996.0,515.0 1005.6,513.1 1005.0,509.9 995.4,511.8" fill="#d42a2a" stroke="#0d1a24" stroke-width="0.5" stroke-linejoin="round"/>
<polygon points="1005.8,514.0 1008.7,513.4 1007.7,508.4 1004.8,509.0" fill="#d42a2a" stroke="#0d1a24" stroke-width="0.5" stroke-linejoin="round"/>
<polygon points="1068.9,562.5 1081.4,559.1 1080.6,556.1 1068.1,559.5" fill="#d42a2a" stroke="#0d1a24" stroke-width="0.5" stroke-linejoin="round"/>
<polygon points="1081.7,560.1 1084.6,559.3 1083.2,554.3 1080.3,555.1" fill="#d42a2a" stroke="#0d1a24" stroke-width="0.5" stroke-linejoin="round"/>
<polygon points="1065.9,591.7 1079.3,589.1 1078.7,585.9 1065.3,588.5" fill="#d42a2a" stroke="#0d1a24" stroke-width="0.5" stroke-linejoin="round"/>
<polygon points="1079.5,590.0 1082.4,589.4 1081.5,584.4 1078.5,585.0" fill="#d42a2a" stroke="#0d1a24" stroke-width="0.5" stroke-linejoin="round"/>
<polygon points="1014.5,558.7 1029.2,573.5 1027.3,580.9 1016.9,574.2 1014.5,563.1" fill="#3d7aa8" stroke="#0d1a24" stroke-width="0.7" stroke-linejoin="round"/>
<polygon points="1014.5,558.7 1016.4,559.2 1030.5,573.0 1029.2,574.2" fill="#5ebdf5" stroke="#0d1a24" stroke-width="0.5" stroke-linejoin="round"/>
<polygon points="1041.6,585.3 1047.7,583.3 1059.3,597.6 1058.8,605.5 1053.4,606.5 1042.1,594.6" fill="#3d7aa8" stroke="#0d1a24" stroke-width="0.7" stroke-linejoin="round"/>
<polygon points="1041.6,585.3 1047.7,583.3 1059.3,597.6 1053.4,599.6" fill="#5ebdf5" stroke="#0d1a24" stroke-width="0.6" stroke-linejoin="round"/>
<polygon points="1034.2,588.2 1041.1,585.8 1046.5,590.7 1046.0,598.1 1039.6,598.8 1034.2,594.6" fill="#4a90c0" stroke="#0d1a24" stroke-width="0.7" stroke-linejoin="round"/>
<polygon points="1034.2,588.2 1041.1,585.8 1046.0,590.7 1039.1,593.2" fill="#5ebdf5" stroke="#0d1a24" stroke-width="0.6" stroke-linejoin="round"/>
<polygon points="1042.8,601.3 1046.5,600.1 1094.5,649.3 1096.2,660.4 1092.8,664.1 1042.8,613.6" fill="#3d7aa8" stroke="#0d1a24" stroke-width="0.7" stroke-linejoin="round"/>
<polygon points="1042.8,601.3 1046.5,600.1 1094.5,649.3 1091.3,650.8" fill="#5ebdf5" stroke="#0d1a24" stroke-width="0.6" stroke-linejoin="round"/>
<polyline points="1094.5,656.7 1100.2,660.4" fill="none" stroke="#0d1a24" stroke-width="0.9"/>
<polygon points="1115.9,677.6 1129.7,673.4 1140.6,678.4 1141.3,691.2 1124.1,693.6 1115.9,686.2" fill="#3a7aa8" stroke="#0d1a24" stroke-width="0.7" stroke-linejoin="round"/>
<polygon points="1115.9,677.6 1127.7,674.4 1130.7,683.8 1118.4,687.5" fill="#5ebdf5" stroke="#0d1a24" stroke-width="0.6" stroke-linejoin="round"/>
<polygon points="1129.7,669.5 1137.6,676.9 1141.3,691.2 1132.7,685.0" fill="#2b5470" stroke="#0d1a24" stroke-width="0.6" stroke-linejoin="round"/>
<polygon points="777.9,519.4 901.6,672.4 909.6,771.9 906.7,770.0 870.0,712.0 840.0,674.0 831.0,662.0 783.9,590.6 780.9,592.0 776.9,553.0" fill="#3d7299" stroke="#0d1a24" stroke-width="0.8" stroke-linejoin="round"/>
<polygon points="778.5,557.0 795.0,575.0 810.0,600.0 822.0,630.0 832.0,660.0 840.0,674.0 783.9,590.6" fill="#1d3a50" stroke="#0d1a24" stroke-width="0.6" stroke-linejoin="round"/>
<line x1="779.0" y1="560.0" x2="833.0" y2="660.0" stroke="#000" stroke-width="0.8"/>
<line x1="779.7" y1="565.0" x2="834.0" y2="662.2" stroke="#000" stroke-width="0.8"/>
<line x1="780.3" y1="570.0" x2="835.0" y2="664.3" stroke="#000" stroke-width="0.8"/>
<line x1="781.0" y1="575.0" x2="836.0" y2="666.5" stroke="#000" stroke-width="0.8"/>
<line x1="781.7" y1="580.0" x2="837.0" y2="668.7" stroke="#000" stroke-width="0.8"/>
<line x1="782.3" y1="585.0" x2="838.0" y2="670.8" stroke="#000" stroke-width="0.8"/>
<polygon points="831.0,662.0 840.0,674.0 842.0,690.0 833.0,684.0 830.0,672.0" fill="#2f6188" stroke="#0d1a24" stroke-width="0.6" stroke-linejoin="round"/>
<polygon points="783.9,590.6 906.7,754.2 906.0,758.0 783.0,594.0" fill="#5aaee0" stroke="#0d1a24" stroke-width="0.6" stroke-linejoin="round"/>
<polyline points="786.0,598.0 905.0,762.0" fill="none" stroke="#0d1a24" stroke-width="0.7"/>
<polygon points="777.9,519.4 799.5,510.1 925.5,665.8 901.6,672.4" fill="#5ebdf5" stroke="#0d1a24" stroke-width="0.8" stroke-linejoin="round"/>
<polyline points="794.5,540.0 862.4,624.8 896.0,667.0" fill="none" stroke="#0d1a24" stroke-width="0.7"/>
<polyline points="791.5,541.0 859.5,626.0 893.5,668.0" fill="none" stroke="#0d1a24" stroke-width="0.6"/>
<polygon points="901.6,672.4 925.5,665.8 926.8,767.9 909.6,771.9" fill="#2b5470" stroke="#0d1a24" stroke-width="0.8" stroke-linejoin="round"/>
<polygon points="838.9,619.5 841.0,618.5 861.0,645.0 860.9,647.6 858.0,649.0" fill="#5ebdf5" stroke="#0d1a24" stroke-width="0.6" stroke-linejoin="round"/>
<polygon points="840.0,651.0 842.0,650.0 861.0,677.0 860.0,680.0" fill="#2f5f80" stroke="#0d1a24" stroke-width="0.6" stroke-linejoin="round"/>
<circle cx="845.5" cy="622.5" r="0.9" fill="#0d1a24"/>
<circle cx="846.5" cy="653.0" r="0.9" fill="#0d1a24"/>
<polyline points="859.4,623.3 860.5,660.0 864.0,691.5 896.0,760.0" fill="none" stroke="#0d1a24" stroke-width="0.8"/>
<polyline points="862.5,622.5 864.0,660.0 867.0,690.0 898.0,755.0" fill="none" stroke="#6cc8fa" stroke-width="0.8"/>
<polyline points="868.0,628.0 895.0,662.0 902.0,672.0" fill="none" stroke="#0d1a24" stroke-width="0.7"/>
<polyline points="862.0,660.0 898.0,696.0" fill="none" stroke="#0d1a24" stroke-width="0.7"/>
<polyline points="892.0,660.0 901.0,672.0 900.0,730.0 897.0,752.0" fill="none" stroke="#0d1a24" stroke-width="0.8"/>
<polyline points="894.5,660.0 903.0,672.0 902.5,728.0" fill="none" stroke="#6cc8fa" stroke-width="0.8"/>
<circle cx="878.5" cy="657.9" r="2.3" fill="#3a7aa8" stroke="#0d1a24" stroke-width="0.7"/>
<circle cx="879.2" cy="689" r="2.3" fill="#3a7aa8" stroke="#0d1a24" stroke-width="0.7"/>
<polygon points="896.0,743.0 906.0,745.0 907.0,752.0 897.0,750.0" fill="#3a7aa8" stroke="#0d1a24" stroke-width="0.6" stroke-linejoin="round"/>
<polygon points="191.5,660.0 292.5,626.7 293.5,630.8 194.6,668.8" fill="#2f5f80" stroke="#0d1a24" stroke-width="0.8" stroke-linejoin="round"/>
<polygon points="168.5,510.0 166.5,512.1 191.5,665.2 191.5,660.0" fill="#2f5f80" stroke="#0d1a24" stroke-width="0.6" stroke-linejoin="round"/>
<polygon points="168.5,510.0 252.9,472.9 292.5,626.7 191.5,660.0" fill="#5ebdf5" stroke="#0d1a24" stroke-width="0.8" stroke-linejoin="round"/>
<polygon points="168.5,510.0 181.2,504.4 205.9,650.5 190.8,655.5" fill="#24506c" stroke="#0d1a24" stroke-width="0.9" stroke-linejoin="round"/>
<polygon points="168.5,510.0 178.7,505.6 179.3,509.2 169.1,513.7" fill="#5ebdf5" stroke="#0d1a24" stroke-width="0.8" stroke-linejoin="round"/>
<polygon points="169.1,513.7 179.3,509.2 179.7,511.9 169.5,516.3" fill="#3f8cc0" stroke="#0d1a24" stroke-width="0.6" stroke-linejoin="round"/>
<polygon points="169.5,516.3 179.7,511.9 180.3,515.6 170.1,520.0" fill="#5ebdf5" stroke="#0d1a24" stroke-width="0.8" stroke-linejoin="round"/>
<polygon points="170.1,520.0 180.3,515.6 180.8,518.2 170.5,522.7" fill="#3f8cc0" stroke="#0d1a24" stroke-width="0.6" stroke-linejoin="round"/>
<polygon points="170.5,522.7 180.8,518.2 181.4,521.9 171.0,526.3" fill="#5ebdf5" stroke="#0d1a24" stroke-width="0.8" stroke-linejoin="round"/>
<polygon points="171.0,526.3 181.4,521.9 181.8,524.6 171.4,529.0" fill="#3f8cc0" stroke="#0d1a24" stroke-width="0.6" stroke-linejoin="round"/>
<polygon points="171.4,529.0 181.8,524.6 182.4,528.3 172.0,532.6" fill="#5ebdf5" stroke="#0d1a24" stroke-width="0.8" stroke-linejoin="round"/>
<polygon points="172.0,532.6 182.4,528.3 182.9,530.9 172.4,535.3" fill="#3f8cc0" stroke="#0d1a24" stroke-width="0.6" stroke-linejoin="round"/>
<polygon points="172.4,535.3 182.9,530.9 183.5,534.6 173.0,539.0" fill="#5ebdf5" stroke="#0d1a24" stroke-width="0.8" stroke-linejoin="round"/>
<polygon points="173.0,539.0 183.5,534.6 183.9,537.3 173.4,541.6" fill="#3f8cc0" stroke="#0d1a24" stroke-width="0.6" stroke-linejoin="round"/>
<polygon points="173.4,541.6 183.9,537.3 184.5,541.0 173.9,545.3" fill="#5ebdf5" stroke="#0d1a24" stroke-width="0.8" stroke-linejoin="round"/>
<polygon points="173.9,545.3 184.5,541.0 185.0,543.6 174.3,548.0" fill="#3f8cc0" stroke="#0d1a24" stroke-width="0.6" stroke-linejoin="round"/>
<polygon points="174.3,548.0 185.0,543.6 185.6,547.3 174.9,551.6" fill="#5ebdf5" stroke="#0d1a24" stroke-width="0.8" stroke-linejoin="round"/>
<polygon points="174.9,551.6 185.6,547.3 186.0,550.0 175.3,554.3" fill="#3f8cc0" stroke="#0d1a24" stroke-width="0.6" stroke-linejoin="round"/>
<polygon points="175.3,554.3 186.0,550.0 186.6,553.6 175.9,558.0" fill="#5ebdf5" stroke="#0d1a24" stroke-width="0.8" stroke-linejoin="round"/>
<polygon points="175.9,558.0 186.6,553.6 187.1,556.3 176.3,560.6" fill="#3f8cc0" stroke="#0d1a24" stroke-width="0.6" stroke-linejoin="round"/>
<polygon points="176.3,560.6 187.1,556.3 187.7,560.0 176.8,564.3" fill="#5ebdf5" stroke="#0d1a24" stroke-width="0.8" stroke-linejoin="round"/>
<polygon points="176.8,564.3 187.7,560.0 188.1,562.7 177.2,566.9" fill="#3f8cc0" stroke="#0d1a24" stroke-width="0.6" stroke-linejoin="round"/>
<polygon points="177.2,566.9 188.1,562.7 188.7,566.3 177.8,570.6" fill="#5ebdf5" stroke="#0d1a24" stroke-width="0.8" stroke-linejoin="round"/>
<polygon points="177.8,570.6 188.7,566.3 189.2,569.0 178.2,573.3" fill="#3f8cc0" stroke="#0d1a24" stroke-width="0.6" stroke-linejoin="round"/>
<polygon points="178.2,573.3 189.2,569.0 189.8,572.7 178.8,576.9" fill="#5ebdf5" stroke="#0d1a24" stroke-width="0.8" stroke-linejoin="round"/>
<polygon points="178.8,576.9 189.8,572.7 190.2,575.3 179.2,579.6" fill="#3f8cc0" stroke="#0d1a24" stroke-width="0.6" stroke-linejoin="round"/>
<polygon points="179.2,579.6 190.2,575.3 190.8,579.0 179.7,583.3" fill="#5ebdf5" stroke="#0d1a24" stroke-width="0.8" stroke-linejoin="round"/>
<polygon points="179.7,583.3 190.8,579.0 191.3,581.7 180.1,585.9" fill="#3f8cc0" stroke="#0d1a24" stroke-width="0.6" stroke-linejoin="round"/>
<polygon points="180.1,585.9 191.3,581.7 191.9,585.4 180.7,589.6" fill="#5ebdf5" stroke="#0d1a24" stroke-width="0.8" stroke-linejoin="round"/>
<polygon points="180.7,589.6 191.9,585.4 192.3,588.0 181.1,592.2" fill="#3f8cc0" stroke="#0d1a24" stroke-width="0.6" stroke-linejoin="round"/>
<polygon points="181.1,592.2 192.3,588.0 192.9,591.7 181.7,595.9" fill="#5ebdf5" stroke="#0d1a24" stroke-width="0.8" stroke-linejoin="round"/>
<polygon points="181.7,595.9 192.9,591.7 193.4,594.4 182.1,598.6" fill="#3f8cc0" stroke="#0d1a24" stroke-width="0.6" stroke-linejoin="round"/>
<polygon points="182.1,598.6 193.4,594.4 194.0,598.1 182.6,602.2" fill="#5ebdf5" stroke="#0d1a24" stroke-width="0.8" stroke-linejoin="round"/>
<polygon points="182.6,602.2 194.0,598.1 194.4,600.7 183.0,604.9" fill="#3f8cc0" stroke="#0d1a24" stroke-width="0.6" stroke-linejoin="round"/>
<polygon points="183.0,604.9 194.4,600.7 195.0,604.4 183.6,608.6" fill="#5ebdf5" stroke="#0d1a24" stroke-width="0.8" stroke-linejoin="round"/>
<polygon points="183.6,608.6 195.0,604.4 195.5,607.1 184.0,611.2" fill="#3f8cc0" stroke="#0d1a24" stroke-width="0.6" stroke-linejoin="round"/>
<polygon points="184.0,611.2 195.5,607.1 196.1,610.8 184.6,614.9" fill="#5ebdf5" stroke="#0d1a24" stroke-width="0.8" stroke-linejoin="round"/>
<polygon points="184.6,614.9 196.1,610.8 196.5,613.4 185.0,617.5" fill="#3f8cc0" stroke="#0d1a24" stroke-width="0.6" stroke-linejoin="round"/>
<polygon points="185.0,617.5 196.5,613.4 197.1,617.1 185.5,621.2" fill="#5ebdf5" stroke="#0d1a24" stroke-width="0.8" stroke-linejoin="round"/>
<polygon points="185.5,621.2 197.1,617.1 197.6,619.8 185.9,623.9" fill="#3f8cc0" stroke="#0d1a24" stroke-width="0.6" stroke-linejoin="round"/>
<polygon points="185.9,623.9 197.6,619.8 198.2,623.4 186.5,627.5" fill="#5ebdf5" stroke="#0d1a24" stroke-width="0.8" stroke-linejoin="round"/>
<polygon points="186.5,627.5 198.2,623.4 198.6,626.1 186.9,630.2" fill="#3f8cc0" stroke="#0d1a24" stroke-width="0.6" stroke-linejoin="round"/>
<polygon points="186.9,630.2 198.6,626.1 199.2,629.8 187.5,633.9" fill="#5ebdf5" stroke="#0d1a24" stroke-width="0.8" stroke-linejoin="round"/>
<polygon points="187.5,633.9 199.2,629.8 199.7,632.5 187.9,636.5" fill="#3f8cc0" stroke="#0d1a24" stroke-width="0.6" stroke-linejoin="round"/>
<polygon points="187.9,636.5 199.7,632.5 200.3,636.1 188.4,640.2" fill="#5ebdf5" stroke="#0d1a24" stroke-width="0.8" stroke-linejoin="round"/>
<polygon points="188.4,640.2 200.3,636.1 200.7,638.8 188.8,642.8" fill="#3f8cc0" stroke="#0d1a24" stroke-width="0.6" stroke-linejoin="round"/>
<polygon points="188.8,642.8 200.7,638.8 201.3,642.5 189.4,646.5" fill="#5ebdf5" stroke="#0d1a24" stroke-width="0.8" stroke-linejoin="round"/>
<polygon points="189.4,646.5 201.3,642.5 201.8,645.1 189.8,649.2" fill="#3f8cc0" stroke="#0d1a24" stroke-width="0.6" stroke-linejoin="round"/>
<polygon points="189.8,649.2 201.8,645.1 202.4,648.8 190.4,652.8" fill="#5ebdf5" stroke="#0d1a24" stroke-width="0.8" stroke-linejoin="round"/>
<polygon points="190.4,652.8 202.4,648.8 202.8,651.5 190.8,655.5" fill="#3f8cc0" stroke="#0d1a24" stroke-width="0.6" stroke-linejoin="round"/>
<polygon points="180.4,499.9 192.2,494.7 219.9,645.8 205.9,650.5" fill="#24506c" stroke="#0d1a24" stroke-width="0.9" stroke-linejoin="round"/>
<polygon points="180.4,499.9 189.8,495.8 190.5,499.6 181.1,503.7" fill="#5ebdf5" stroke="#0d1a24" stroke-width="0.8" stroke-linejoin="round"/>
<polygon points="181.1,503.7 190.5,499.6 191.0,502.3 181.5,506.5" fill="#3f8cc0" stroke="#0d1a24" stroke-width="0.6" stroke-linejoin="round"/>
<polygon points="181.5,506.5 191.0,502.3 191.7,506.1 182.2,510.3" fill="#5ebdf5" stroke="#0d1a24" stroke-width="0.8" stroke-linejoin="round"/>
<polygon points="182.2,510.3 191.7,506.1 192.2,508.9 182.6,513.0" fill="#3f8cc0" stroke="#0d1a24" stroke-width="0.6" stroke-linejoin="round"/>
<polygon points="182.6,513.0 192.2,508.9 192.9,512.7 183.3,516.8" fill="#5ebdf5" stroke="#0d1a24" stroke-width="0.8" stroke-linejoin="round"/>
<polygon points="183.3,516.8 192.9,512.7 193.4,515.4 183.8,519.6" fill="#3f8cc0" stroke="#0d1a24" stroke-width="0.6" stroke-linejoin="round"/>
<polygon points="183.8,519.6 193.4,515.4 194.1,519.3 184.4,523.4" fill="#5ebdf5" stroke="#0d1a24" stroke-width="0.8" stroke-linejoin="round"/>
<polygon points="184.4,523.4 194.1,519.3 194.6,522.0 184.9,526.1" fill="#3f8cc0" stroke="#0d1a24" stroke-width="0.6" stroke-linejoin="round"/>
<polygon points="184.9,526.1 194.6,522.0 195.3,525.8 185.5,529.9" fill="#5ebdf5" stroke="#0d1a24" stroke-width="0.8" stroke-linejoin="round"/>
<polygon points="185.5,529.9 195.3,525.8 195.8,528.6 186.0,532.7" fill="#3f8cc0" stroke="#0d1a24" stroke-width="0.6" stroke-linejoin="round"/>
<polygon points="186.0,532.7 195.8,528.6 196.4,532.4 186.6,536.4" fill="#5ebdf5" stroke="#0d1a24" stroke-width="0.8" stroke-linejoin="round"/>
<polygon points="186.6,536.4 196.4,532.4 196.9,535.1 187.1,539.2" fill="#3f8cc0" stroke="#0d1a24" stroke-width="0.6" stroke-linejoin="round"/>
<polygon points="187.1,539.2 196.9,535.1 197.6,538.9 187.7,543.0" fill="#5ebdf5" stroke="#0d1a24" stroke-width="0.8" stroke-linejoin="round"/>
<polygon points="187.7,543.0 197.6,538.9 198.1,541.7 188.2,545.7" fill="#3f8cc0" stroke="#0d1a24" stroke-width="0.6" stroke-linejoin="round"/>
<polygon points="188.2,545.7 198.1,541.7 198.8,545.5 188.8,549.5" fill="#5ebdf5" stroke="#0d1a24" stroke-width="0.8" stroke-linejoin="round"/>
<polygon points="188.8,549.5 198.8,545.5 199.3,548.3 189.3,552.3" fill="#3f8cc0" stroke="#0d1a24" stroke-width="0.6" stroke-linejoin="round"/>
<polygon points="189.3,552.3 199.3,548.3 200.0,552.1 189.9,556.1" fill="#5ebdf5" stroke="#0d1a24" stroke-width="0.8" stroke-linejoin="round"/>
<polygon points="189.9,556.1 200.0,552.1 200.5,554.8 190.4,558.8" fill="#3f8cc0" stroke="#0d1a24" stroke-width="0.6" stroke-linejoin="round"/>
<polygon points="190.4,558.8 200.5,554.8 201.2,558.6 191.0,562.6" fill="#5ebdf5" stroke="#0d1a24" stroke-width="0.8" stroke-linejoin="round"/>
<polygon points="191.0,562.6 201.2,558.6 201.7,561.4 191.5,565.4" fill="#3f8cc0" stroke="#0d1a24" stroke-width="0.6" stroke-linejoin="round"/>
<polygon points="191.5,565.4 201.7,561.4 202.4,565.2 192.1,569.2" fill="#5ebdf5" stroke="#0d1a24" stroke-width="0.8" stroke-linejoin="round"/>
<polygon points="192.1,569.2 202.4,565.2 202.9,568.0 192.6,571.9" fill="#3f8cc0" stroke="#0d1a24" stroke-width="0.6" stroke-linejoin="round"/>
<polygon points="192.6,571.9 202.9,568.0 203.6,571.8 193.2,575.7" fill="#5ebdf5" stroke="#0d1a24" stroke-width="0.8" stroke-linejoin="round"/>
<polygon points="193.2,575.7 203.6,571.8 204.1,574.5 193.7,578.5" fill="#3f8cc0" stroke="#0d1a24" stroke-width="0.6" stroke-linejoin="round"/>
<polygon points="193.7,578.5 204.1,574.5 204.8,578.3 194.3,582.3" fill="#5ebdf5" stroke="#0d1a24" stroke-width="0.8" stroke-linejoin="round"/>
<polygon points="194.3,582.3 204.8,578.3 205.3,581.1 194.8,585.0" fill="#3f8cc0" stroke="#0d1a24" stroke-width="0.6" stroke-linejoin="round"/>
<polygon points="194.8,585.0 205.3,581.1 205.9,584.9 195.4,588.8" fill="#5ebdf5" stroke="#0d1a24" stroke-width="0.8" stroke-linejoin="round"/>
<polygon points="195.4,588.8 205.9,584.9 206.4,587.7 195.9,591.6" fill="#3f8cc0" stroke="#0d1a24" stroke-width="0.6" stroke-linejoin="round"/>
<polygon points="195.9,591.6 206.4,587.7 207.1,591.5 196.5,595.4" fill="#5ebdf5" stroke="#0d1a24" stroke-width="0.8" stroke-linejoin="round"/>
<polygon points="196.5,595.4 207.1,591.5 207.6,594.2 197.0,598.1" fill="#3f8cc0" stroke="#0d1a24" stroke-width="0.6" stroke-linejoin="round"/>
<polygon points="197.0,598.1 207.6,594.2 208.3,598.0 197.7,601.9" fill="#5ebdf5" stroke="#0d1a24" stroke-width="0.8" stroke-linejoin="round"/>
<polygon points="197.7,601.9 208.3,598.0 208.8,600.8 198.1,604.7" fill="#3f8cc0" stroke="#0d1a24" stroke-width="0.6" stroke-linejoin="round"/>
<polygon points="198.1,604.7 208.8,600.8 209.5,604.6 198.8,608.5" fill="#5ebdf5" stroke="#0d1a24" stroke-width="0.8" stroke-linejoin="round"/>
<polygon points="198.8,608.5 209.5,604.6 210.0,607.4 199.2,611.2" fill="#3f8cc0" stroke="#0d1a24" stroke-width="0.6" stroke-linejoin="round"/>
<polygon points="199.2,611.2 210.0,607.4 210.7,611.2 199.9,615.0" fill="#5ebdf5" stroke="#0d1a24" stroke-width="0.8" stroke-linejoin="round"/>
<polygon points="199.9,615.0 210.7,611.2 211.2,613.9 200.3,617.8" fill="#3f8cc0" stroke="#0d1a24" stroke-width="0.6" stroke-linejoin="round"/>
<polygon points="200.3,617.8 211.2,613.9 211.9,617.7 201.0,621.5" fill="#5ebdf5" stroke="#0d1a24" stroke-width="0.8" stroke-linejoin="round"/>
<polygon points="201.0,621.5 211.9,617.7 212.4,620.5 201.4,624.3" fill="#3f8cc0" stroke="#0d1a24" stroke-width="0.6" stroke-linejoin="round"/>
<polygon points="201.4,624.3 212.4,620.5 213.1,624.3 202.1,628.1" fill="#5ebdf5" stroke="#0d1a24" stroke-width="0.8" stroke-linejoin="round"/>
<polygon points="202.1,628.1 213.1,624.3 213.6,627.0 202.5,630.8" fill="#3f8cc0" stroke="#0d1a24" stroke-width="0.6" stroke-linejoin="round"/>
<polygon points="202.5,630.8 213.6,627.0 214.2,630.9 203.2,634.6" fill="#5ebdf5" stroke="#0d1a24" stroke-width="0.8" stroke-linejoin="round"/>
<polygon points="203.2,634.6 214.2,630.9 214.7,633.6 203.6,637.4" fill="#3f8cc0" stroke="#0d1a24" stroke-width="0.6" stroke-linejoin="round"/>
<polygon points="203.6,637.4 214.7,633.6 215.4,637.4 204.3,641.2" fill="#5ebdf5" stroke="#0d1a24" stroke-width="0.8" stroke-linejoin="round"/>
<polygon points="204.3,641.2 215.4,637.4 215.9,640.2 204.7,643.9" fill="#3f8cc0" stroke="#0d1a24" stroke-width="0.6" stroke-linejoin="round"/>
<polygon points="204.7,643.9 215.9,640.2 216.6,644.0 205.4,647.7" fill="#5ebdf5" stroke="#0d1a24" stroke-width="0.8" stroke-linejoin="round"/>
<polygon points="205.4,647.7 216.6,644.0 217.1,646.7 205.9,650.5" fill="#3f8cc0" stroke="#0d1a24" stroke-width="0.6" stroke-linejoin="round"/>
<polygon points="192.5,491.3 204.2,486.1 235.0,640.8 220.9,645.5" fill="#24506c" stroke="#0d1a24" stroke-width="0.9" stroke-linejoin="round"/>
<polygon points="192.5,491.3 201.8,487.1 202.5,490.9 193.1,495.0" fill="#5ebdf5" stroke="#0d1a24" stroke-width="0.8" stroke-linejoin="round"/>
<polygon points="193.1,495.0 202.5,490.9 203.1,493.6 193.6,497.7" fill="#3f8cc0" stroke="#0d1a24" stroke-width="0.6" stroke-linejoin="round"/>
<polygon points="193.6,497.7 203.1,493.6 203.8,497.3 194.3,501.5" fill="#5ebdf5" stroke="#0d1a24" stroke-width="0.8" stroke-linejoin="round"/>
<polygon points="194.3,501.5 203.8,497.3 204.3,500.0 194.8,504.2" fill="#3f8cc0" stroke="#0d1a24" stroke-width="0.6" stroke-linejoin="round"/>
<polygon points="194.8,504.2 204.3,500.0 205.1,503.8 195.5,507.9" fill="#5ebdf5" stroke="#0d1a24" stroke-width="0.8" stroke-linejoin="round"/>
<polygon points="195.5,507.9 205.1,503.8 205.6,506.5 196.0,510.6" fill="#3f8cc0" stroke="#0d1a24" stroke-width="0.6" stroke-linejoin="round"/>
<polygon points="196.0,510.6 205.6,506.5 206.3,510.2 196.7,514.3" fill="#5ebdf5" stroke="#0d1a24" stroke-width="0.8" stroke-linejoin="round"/>
<polygon points="196.7,514.3 206.3,510.2 206.9,512.9 197.2,517.0" fill="#3f8cc0" stroke="#0d1a24" stroke-width="0.6" stroke-linejoin="round"/>
<polygon points="197.2,517.0 206.9,512.9 207.6,516.6 197.9,520.7" fill="#5ebdf5" stroke="#0d1a24" stroke-width="0.8" stroke-linejoin="round"/>
<polygon points="197.9,520.7 207.6,516.6 208.1,519.3 198.4,523.4" fill="#3f8cc0" stroke="#0d1a24" stroke-width="0.6" stroke-linejoin="round"/>
<polygon points="198.4,523.4 208.1,519.3 208.9,523.1 199.1,527.2" fill="#5ebdf5" stroke="#0d1a24" stroke-width="0.8" stroke-linejoin="round"/>
<polygon points="199.1,527.2 208.9,523.1 209.4,525.8 199.6,529.9" fill="#3f8cc0" stroke="#0d1a24" stroke-width="0.6" stroke-linejoin="round"/>
<polygon points="199.6,529.9 209.4,525.8 210.1,529.5 200.3,533.6" fill="#5ebdf5" stroke="#0d1a24" stroke-width="0.8" stroke-linejoin="round"/>
<polygon points="200.3,533.6 210.1,529.5 210.7,532.2 200.8,536.3" fill="#3f8cc0" stroke="#0d1a24" stroke-width="0.6" stroke-linejoin="round"/>
<polygon points="200.8,536.3 210.7,532.2 211.4,536.0 201.5,540.0" fill="#5ebdf5" stroke="#0d1a24" stroke-width="0.8" stroke-linejoin="round"/>
<polygon points="201.5,540.0 211.4,536.0 211.9,538.7 201.9,542.7" fill="#3f8cc0" stroke="#0d1a24" stroke-width="0.6" stroke-linejoin="round"/>
<polygon points="201.9,542.7 211.9,538.7 212.7,542.4 202.6,546.4" fill="#5ebdf5" stroke="#0d1a24" stroke-width="0.8" stroke-linejoin="round"/>
<polygon points="202.6,546.4 212.7,542.4 213.2,545.1 203.1,549.1" fill="#3f8cc0" stroke="#0d1a24" stroke-width="0.6" stroke-linejoin="round"/>
<polygon points="203.1,549.1 213.2,545.1 213.9,548.8 203.8,552.8" fill="#5ebdf5" stroke="#0d1a24" stroke-width="0.8" stroke-linejoin="round"/>
<polygon points="203.8,552.8 213.9,548.8 214.5,551.6 204.3,555.5" fill="#3f8cc0" stroke="#0d1a24" stroke-width="0.6" stroke-linejoin="round"/>
<polygon points="204.3,555.5 214.5,551.6 215.2,555.3 205.0,559.3" fill="#5ebdf5" stroke="#0d1a24" stroke-width="0.8" stroke-linejoin="round"/>
<polygon points="205.0,559.3 215.2,555.3 215.7,558.0 205.5,562.0" fill="#3f8cc0" stroke="#0d1a24" stroke-width="0.6" stroke-linejoin="round"/>
<polygon points="205.5,562.0 215.7,558.0 216.5,561.7 206.2,565.7" fill="#5ebdf5" stroke="#0d1a24" stroke-width="0.8" stroke-linejoin="round"/>
<polygon points="206.2,565.7 216.5,561.7 217.0,564.4 206.7,568.4" fill="#3f8cc0" stroke="#0d1a24" stroke-width="0.6" stroke-linejoin="round"/>
<polygon points="206.7,568.4 217.0,564.4 217.7,568.2 207.4,572.1" fill="#5ebdf5" stroke="#0d1a24" stroke-width="0.8" stroke-linejoin="round"/>
<polygon points="207.4,572.1 217.7,568.2 218.3,570.9 207.9,574.8" fill="#3f8cc0" stroke="#0d1a24" stroke-width="0.6" stroke-linejoin="round"/>
<polygon points="207.9,574.8 218.3,570.9 219.0,574.6 208.6,578.5" fill="#5ebdf5" stroke="#0d1a24" stroke-width="0.8" stroke-linejoin="round"/>
<polygon points="208.6,578.5 219.0,574.6 219.5,577.3 209.1,581.2" fill="#3f8cc0" stroke="#0d1a24" stroke-width="0.6" stroke-linejoin="round"/>
<polygon points="209.1,581.2 219.5,577.3 220.3,581.0 209.8,585.0" fill="#5ebdf5" stroke="#0d1a24" stroke-width="0.8" stroke-linejoin="round"/>
<polygon points="209.8,585.0 220.3,581.0 220.8,583.8 210.3,587.7" fill="#3f8cc0" stroke="#0d1a24" stroke-width="0.6" stroke-linejoin="round"/>
<polygon points="210.3,587.7 220.8,583.8 221.5,587.5 210.9,591.4" fill="#5ebdf5" stroke="#0d1a24" stroke-width="0.8" stroke-linejoin="round"/>
<polygon points="210.9,591.4 221.5,587.5 222.1,590.2 211.4,594.1" fill="#3f8cc0" stroke="#0d1a24" stroke-width="0.6" stroke-linejoin="round"/>
<polygon points="211.4,594.1 222.1,590.2 222.8,593.9 212.1,597.8" fill="#5ebdf5" stroke="#0d1a24" stroke-width="0.8" stroke-linejoin="round"/>
<polygon points="212.1,597.8 222.8,593.9 223.3,596.6 212.6,600.5" fill="#3f8cc0" stroke="#0d1a24" stroke-width="0.6" stroke-linejoin="round"/>
<polygon points="212.6,600.5 223.3,596.6 224.1,600.4 213.3,604.2" fill="#5ebdf5" stroke="#0d1a24" stroke-width="0.8" stroke-linejoin="round"/>
<polygon points="213.3,604.2 224.1,600.4 224.6,603.1 213.8,606.9" fill="#3f8cc0" stroke="#0d1a24" stroke-width="0.6" stroke-linejoin="round"/>
<polygon points="213.8,606.9 224.6,603.1 225.3,606.8 214.5,610.7" fill="#5ebdf5" stroke="#0d1a24" stroke-width="0.8" stroke-linejoin="round"/>
<polygon points="214.5,610.7 225.3,606.8 225.9,609.5 215.0,613.4" fill="#3f8cc0" stroke="#0d1a24" stroke-width="0.6" stroke-linejoin="round"/>
<polygon points="215.0,613.4 225.9,609.5 226.6,613.3 215.7,617.1" fill="#5ebdf5" stroke="#0d1a24" stroke-width="0.8" stroke-linejoin="round"/>
<polygon points="215.7,617.1 226.6,613.3 227.1,616.0 216.2,619.8" fill="#3f8cc0" stroke="#0d1a24" stroke-width="0.6" stroke-linejoin="round"/>
<polygon points="216.2,619.8 227.1,616.0 227.9,619.7 216.9,623.5" fill="#5ebdf5" stroke="#0d1a24" stroke-width="0.8" stroke-linejoin="round"/>
<polygon points="216.9,623.5 227.9,619.7 228.4,622.4 217.4,626.2" fill="#3f8cc0" stroke="#0d1a24" stroke-width="0.6" stroke-linejoin="round"/>
<polygon points="217.4,626.2 228.4,622.4 229.1,626.1 218.1,629.9" fill="#5ebdf5" stroke="#0d1a24" stroke-width="0.8" stroke-linejoin="round"/>
<polygon points="218.1,629.9 229.1,626.1 229.7,628.8 218.6,632.6" fill="#3f8cc0" stroke="#0d1a24" stroke-width="0.6" stroke-linejoin="round"/>
<polygon points="218.6,632.6 229.7,628.8 230.4,632.6 219.2,636.3" fill="#5ebdf5" stroke="#0d1a24" stroke-width="0.8" stroke-linejoin="round"/>
<polygon points="219.2,636.3 230.4,632.6 230.9,635.3 219.7,639.0" fill="#3f8cc0" stroke="#0d1a24" stroke-width="0.6" stroke-linejoin="round"/>
<polygon points="219.7,639.0 230.9,635.3 231.7,639.0 220.4,642.8" fill="#5ebdf5" stroke="#0d1a24" stroke-width="0.8" stroke-linejoin="round"/>
<polygon points="220.4,642.8 231.7,639.0 232.2,641.7 220.9,645.5" fill="#3f8cc0" stroke="#0d1a24" stroke-width="0.6" stroke-linejoin="round"/>
<polygon points="205.3,487.2 217.0,482.0 250.1,635.8 236.0,640.4" fill="#24506c" stroke="#0d1a24" stroke-width="0.9" stroke-linejoin="round"/>
<polygon points="205.3,487.2 214.7,483.1 215.5,486.8 206.0,490.9" fill="#5ebdf5" stroke="#0d1a24" stroke-width="0.8" stroke-linejoin="round"/>
<polygon points="206.0,490.9 215.5,486.8 216.0,489.5 206.6,493.6" fill="#3f8cc0" stroke="#0d1a24" stroke-width="0.6" stroke-linejoin="round"/>
<polygon points="206.6,493.6 216.0,489.5 216.8,493.2 207.3,497.3" fill="#5ebdf5" stroke="#0d1a24" stroke-width="0.8" stroke-linejoin="round"/>
<polygon points="207.3,497.3 216.8,493.2 217.4,495.9 207.9,500.0" fill="#3f8cc0" stroke="#0d1a24" stroke-width="0.6" stroke-linejoin="round"/>
<polygon points="207.9,500.0 217.4,495.9 218.2,499.6 208.6,503.7" fill="#5ebdf5" stroke="#0d1a24" stroke-width="0.8" stroke-linejoin="round"/>
<polygon points="208.6,503.7 218.2,499.6 218.7,502.3 209.1,506.4" fill="#3f8cc0" stroke="#0d1a24" stroke-width="0.6" stroke-linejoin="round"/>
<polygon points="209.1,506.4 218.7,502.3 219.5,506.0 209.9,510.1" fill="#5ebdf5" stroke="#0d1a24" stroke-width="0.8" stroke-linejoin="round"/>
<polygon points="209.9,510.1 219.5,506.0 220.1,508.7 210.4,512.8" fill="#3f8cc0" stroke="#0d1a24" stroke-width="0.6" stroke-linejoin="round"/>
<polygon points="210.4,512.8 220.1,508.7 220.9,512.4 211.2,516.5" fill="#5ebdf5" stroke="#0d1a24" stroke-width="0.8" stroke-linejoin="round"/>
<polygon points="211.2,516.5 220.9,512.4 221.5,515.1 211.7,519.2" fill="#3f8cc0" stroke="#0d1a24" stroke-width="0.6" stroke-linejoin="round"/>
<polygon points="211.7,519.2 221.5,515.1 222.3,518.8 212.4,522.9" fill="#5ebdf5" stroke="#0d1a24" stroke-width="0.8" stroke-linejoin="round"/>
<polygon points="212.4,522.9 222.3,518.8 222.8,521.5 213.0,525.5" fill="#3f8cc0" stroke="#0d1a24" stroke-width="0.6" stroke-linejoin="round"/>
<polygon points="213.0,525.5 222.8,521.5 223.6,525.2 213.7,529.2" fill="#5ebdf5" stroke="#0d1a24" stroke-width="0.8" stroke-linejoin="round"/>
<polygon points="213.7,529.2 223.6,525.2 224.2,527.9 214.3,531.9" fill="#3f8cc0" stroke="#0d1a24" stroke-width="0.6" stroke-linejoin="round"/>
<polygon points="214.3,531.9 224.2,527.9 225.0,531.6 215.0,535.6" fill="#5ebdf5" stroke="#0d1a24" stroke-width="0.8" stroke-linejoin="round"/>
<polygon points="215.0,535.6 225.0,531.6 225.5,534.3 215.5,538.3" fill="#3f8cc0" stroke="#0d1a24" stroke-width="0.6" stroke-linejoin="round"/>
<polygon points="215.5,538.3 225.5,534.3 226.3,538.0 216.3,542.0" fill="#5ebdf5" stroke="#0d1a24" stroke-width="0.8" stroke-linejoin="round"/>
<polygon points="216.3,542.0 226.3,538.0 226.9,540.7 216.8,544.7" fill="#3f8cc0" stroke="#0d1a24" stroke-width="0.6" stroke-linejoin="round"/>
<polygon points="216.8,544.7 226.9,540.7 227.7,544.4 217.6,548.4" fill="#5ebdf5" stroke="#0d1a24" stroke-width="0.8" stroke-linejoin="round"/>
<polygon points="217.6,548.4 227.7,544.4 228.3,547.1 218.1,551.1" fill="#3f8cc0" stroke="#0d1a24" stroke-width="0.6" stroke-linejoin="round"/>
<polygon points="218.1,551.1 228.3,547.1 229.0,550.8 218.8,554.8" fill="#5ebdf5" stroke="#0d1a24" stroke-width="0.8" stroke-linejoin="round"/>
<polygon points="218.8,554.8 229.0,550.8 229.6,553.5 219.4,557.5" fill="#3f8cc0" stroke="#0d1a24" stroke-width="0.6" stroke-linejoin="round"/>
<polygon points="219.4,557.5 229.6,553.5 230.4,557.2 220.1,561.2" fill="#5ebdf5" stroke="#0d1a24" stroke-width="0.8" stroke-linejoin="round"/>
<polygon points="220.1,561.2 230.4,557.2 231.0,559.9 220.7,563.8" fill="#3f8cc0" stroke="#0d1a24" stroke-width="0.6" stroke-linejoin="round"/>
<polygon points="220.7,563.8 231.0,559.9 231.8,563.6 221.4,567.5" fill="#5ebdf5" stroke="#0d1a24" stroke-width="0.8" stroke-linejoin="round"/>
<polygon points="221.4,567.5 231.8,563.6 232.3,566.3 221.9,570.2" fill="#3f8cc0" stroke="#0d1a24" stroke-width="0.6" stroke-linejoin="round"/>
<polygon points="221.9,570.2 232.3,566.3 233.1,570.0 222.7,573.9" fill="#5ebdf5" stroke="#0d1a24" stroke-width="0.8" stroke-linejoin="round"/>
<polygon points="222.7,573.9 233.1,570.0 233.7,572.7 223.2,576.6" fill="#3f8cc0" stroke="#0d1a24" stroke-width="0.6" stroke-linejoin="round"/>
<polygon points="223.2,576.6 233.7,572.7 234.5,576.4 224.0,580.3" fill="#5ebdf5" stroke="#0d1a24" stroke-width="0.8" stroke-linejoin="round"/>
<polygon points="224.0,580.3 234.5,576.4 235.0,579.1 224.5,583.0" fill="#3f8cc0" stroke="#0d1a24" stroke-width="0.6" stroke-linejoin="round"/>
<polygon points="224.5,583.0 235.0,579.1 235.8,582.8 225.2,586.7" fill="#5ebdf5" stroke="#0d1a24" stroke-width="0.8" stroke-linejoin="round"/>
<polygon points="225.2,586.7 235.8,582.8 236.4,585.5 225.8,589.4" fill="#3f8cc0" stroke="#0d1a24" stroke-width="0.6" stroke-linejoin="round"/>
<polygon points="225.8,589.4 236.4,585.5 237.2,589.2 226.5,593.1" fill="#5ebdf5" stroke="#0d1a24" stroke-width="0.8" stroke-linejoin="round"/>
<polygon points="226.5,593.1 237.2,589.2 237.8,591.9 227.1,595.8" fill="#3f8cc0" stroke="#0d1a24" stroke-width="0.6" stroke-linejoin="round"/>
<polygon points="227.1,595.8 237.8,591.9 238.6,595.6 227.8,599.5" fill="#5ebdf5" stroke="#0d1a24" stroke-width="0.8" stroke-linejoin="round"/>
<polygon points="227.8,599.5 238.6,595.6 239.1,598.3 228.3,602.1" fill="#3f8cc0" stroke="#0d1a24" stroke-width="0.6" stroke-linejoin="round"/>
<polygon points="228.3,602.1 239.1,598.3 239.9,602.0 229.1,605.9" fill="#5ebdf5" stroke="#0d1a24" stroke-width="0.8" stroke-linejoin="round"/>
<polygon points="229.1,605.9 239.9,602.0 240.5,604.7 229.6,608.5" fill="#3f8cc0" stroke="#0d1a24" stroke-width="0.6" stroke-linejoin="round"/>
<polygon points="229.6,608.5 240.5,604.7 241.3,608.4 230.4,612.2" fill="#5ebdf5" stroke="#0d1a24" stroke-width="0.8" stroke-linejoin="round"/>
<polygon points="230.4,612.2 241.3,608.4 241.8,611.1 230.9,614.9" fill="#3f8cc0" stroke="#0d1a24" stroke-width="0.6" stroke-linejoin="round"/>
<polygon points="230.9,614.9 241.8,611.1 242.6,614.8 231.6,618.6" fill="#5ebdf5" stroke="#0d1a24" stroke-width="0.8" stroke-linejoin="round"/>
<polygon points="231.6,618.6 242.6,614.8 243.2,617.5 232.2,621.3" fill="#3f8cc0" stroke="#0d1a24" stroke-width="0.6" stroke-linejoin="round"/>
<polygon points="232.2,621.3 243.2,617.5 244.0,621.2 232.9,625.0" fill="#5ebdf5" stroke="#0d1a24" stroke-width="0.8" stroke-linejoin="round"/>
<polygon points="232.9,625.0 244.0,621.2 244.6,623.9 233.5,627.7" fill="#3f8cc0" stroke="#0d1a24" stroke-width="0.6" stroke-linejoin="round"/>
<polygon points="233.5,627.7 244.6,623.9 245.3,627.6 234.2,631.4" fill="#5ebdf5" stroke="#0d1a24" stroke-width="0.8" stroke-linejoin="round"/>
<polygon points="234.2,631.4 245.3,627.6 245.9,630.3 234.7,634.1" fill="#3f8cc0" stroke="#0d1a24" stroke-width="0.6" stroke-linejoin="round"/>
<polygon points="234.7,634.1 245.9,630.3 246.7,634.0 235.5,637.8" fill="#5ebdf5" stroke="#0d1a24" stroke-width="0.8" stroke-linejoin="round"/>
<polygon points="235.5,637.8 246.7,634.0 247.3,636.7 236.0,640.4" fill="#3f8cc0" stroke="#0d1a24" stroke-width="0.6" stroke-linejoin="round"/>
<polygon points="217.5,480.1 230.1,474.5 266.2,630.4 251.1,635.4" fill="#24506c" stroke="#0d1a24" stroke-width="0.9" stroke-linejoin="round"/>
<polygon points="217.5,480.1 227.5,475.7 228.4,479.4 218.3,483.9" fill="#5ebdf5" stroke="#0d1a24" stroke-width="0.8" stroke-linejoin="round"/>
<polygon points="218.3,483.9 228.4,479.4 229.0,482.2 218.9,486.6" fill="#3f8cc0" stroke="#0d1a24" stroke-width="0.6" stroke-linejoin="round"/>
<polygon points="218.9,486.6 229.0,482.2 229.9,485.9 219.7,490.4" fill="#5ebdf5" stroke="#0d1a24" stroke-width="0.8" stroke-linejoin="round"/>
<polygon points="219.7,490.4 229.9,485.9 230.5,488.6 220.3,493.1" fill="#3f8cc0" stroke="#0d1a24" stroke-width="0.6" stroke-linejoin="round"/>
<polygon points="220.3,493.1 230.5,488.6 231.4,492.4 221.1,496.8" fill="#5ebdf5" stroke="#0d1a24" stroke-width="0.8" stroke-linejoin="round"/>
<polygon points="221.1,496.8 231.4,492.4 232.0,495.1 221.7,499.5" fill="#3f8cc0" stroke="#0d1a24" stroke-width="0.6" stroke-linejoin="round"/>
<polygon points="221.7,499.5 232.0,495.1 232.9,498.9 222.5,503.3" fill="#5ebdf5" stroke="#0d1a24" stroke-width="0.8" stroke-linejoin="round"/>
<polygon points="222.5,503.3 232.9,498.9 233.5,501.6 223.1,506.0" fill="#3f8cc0" stroke="#0d1a24" stroke-width="0.6" stroke-linejoin="round"/>
<polygon points="223.1,506.0 233.5,501.6 234.3,505.4 223.9,509.8" fill="#5ebdf5" stroke="#0d1a24" stroke-width="0.8" stroke-linejoin="round"/>
<polygon points="223.9,509.8 234.3,505.4 235.0,508.1 224.5,512.5" fill="#3f8cc0" stroke="#0d1a24" stroke-width="0.6" stroke-linejoin="round"/>
<polygon points="224.5,512.5 235.0,508.1 235.8,511.9 225.3,516.2" fill="#5ebdf5" stroke="#0d1a24" stroke-width="0.8" stroke-linejoin="round"/>
<polygon points="225.3,516.2 235.8,511.9 236.4,514.6 225.9,519.0" fill="#3f8cc0" stroke="#0d1a24" stroke-width="0.6" stroke-linejoin="round"/>
<polygon points="225.9,519.0 236.4,514.6 237.3,518.4 226.7,522.7" fill="#5ebdf5" stroke="#0d1a24" stroke-width="0.8" stroke-linejoin="round"/>
<polygon points="226.7,522.7 237.3,518.4 237.9,521.1 227.3,525.4" fill="#3f8cc0" stroke="#0d1a24" stroke-width="0.6" stroke-linejoin="round"/>
<polygon points="227.3,525.4 237.9,521.1 238.8,524.9 228.1,529.2" fill="#5ebdf5" stroke="#0d1a24" stroke-width="0.8" stroke-linejoin="round"/>
<polygon points="228.1,529.2 238.8,524.9 239.4,527.6 228.7,531.9" fill="#3f8cc0" stroke="#0d1a24" stroke-width="0.6" stroke-linejoin="round"/>
<polygon points="228.7,531.9 239.4,527.6 240.3,531.3 229.5,535.7" fill="#5ebdf5" stroke="#0d1a24" stroke-width="0.8" stroke-linejoin="round"/>
<polygon points="229.5,535.7 240.3,531.3 240.9,534.1 230.1,538.4" fill="#3f8cc0" stroke="#0d1a24" stroke-width="0.6" stroke-linejoin="round"/>
<polygon points="230.1,538.4 240.9,534.1 241.8,537.8 230.9,542.1" fill="#5ebdf5" stroke="#0d1a24" stroke-width="0.8" stroke-linejoin="round"/>
<polygon points="230.9,542.1 241.8,537.8 242.4,540.6 231.5,544.8" fill="#3f8cc0" stroke="#0d1a24" stroke-width="0.6" stroke-linejoin="round"/>
<polygon points="231.5,544.8 242.4,540.6 243.2,544.3 232.3,548.6" fill="#5ebdf5" stroke="#0d1a24" stroke-width="0.8" stroke-linejoin="round"/>
<polygon points="232.3,548.6 243.2,544.3 243.9,547.1 232.9,551.3" fill="#3f8cc0" stroke="#0d1a24" stroke-width="0.6" stroke-linejoin="round"/>
<polygon points="232.9,551.3 243.9,547.1 244.7,550.8 233.7,555.1" fill="#5ebdf5" stroke="#0d1a24" stroke-width="0.8" stroke-linejoin="round"/>
<polygon points="233.7,555.1 244.7,550.8 245.4,553.5 234.3,557.8" fill="#3f8cc0" stroke="#0d1a24" stroke-width="0.6" stroke-linejoin="round"/>
<polygon points="234.3,557.8 245.4,553.5 246.2,557.3 235.1,561.5" fill="#5ebdf5" stroke="#0d1a24" stroke-width="0.8" stroke-linejoin="round"/>
<polygon points="235.1,561.5 246.2,557.3 246.8,560.0 235.7,564.3" fill="#3f8cc0" stroke="#0d1a24" stroke-width="0.6" stroke-linejoin="round"/>
<polygon points="235.7,564.3 246.8,560.0 247.7,563.8 236.5,568.0" fill="#5ebdf5" stroke="#0d1a24" stroke-width="0.8" stroke-linejoin="round"/>
<polygon points="236.5,568.0 247.7,563.8 248.3,566.5 237.1,570.7" fill="#3f8cc0" stroke="#0d1a24" stroke-width="0.6" stroke-linejoin="round"/>
<polygon points="237.1,570.7 248.3,566.5 249.2,570.3 237.9,574.5" fill="#5ebdf5" stroke="#0d1a24" stroke-width="0.8" stroke-linejoin="round"/>
<polygon points="237.9,574.5 249.2,570.3 249.8,573.0 238.5,577.2" fill="#3f8cc0" stroke="#0d1a24" stroke-width="0.6" stroke-linejoin="round"/>
<polygon points="238.5,577.2 249.8,573.0 250.7,576.8 239.3,580.9" fill="#5ebdf5" stroke="#0d1a24" stroke-width="0.8" stroke-linejoin="round"/>
<polygon points="239.3,580.9 250.7,576.8 251.3,579.5 239.9,583.7" fill="#3f8cc0" stroke="#0d1a24" stroke-width="0.6" stroke-linejoin="round"/>
<polygon points="239.9,583.7 251.3,579.5 252.1,583.3 240.7,587.4" fill="#5ebdf5" stroke="#0d1a24" stroke-width="0.8" stroke-linejoin="round"/>
<polygon points="240.7,587.4 252.1,583.3 252.8,586.0 241.3,590.1" fill="#3f8cc0" stroke="#0d1a24" stroke-width="0.6" stroke-linejoin="round"/>
<polygon points="241.3,590.1 252.8,586.0 253.6,589.8 242.1,593.9" fill="#5ebdf5" stroke="#0d1a24" stroke-width="0.8" stroke-linejoin="round"/>
<polygon points="242.1,593.9 253.6,589.8 254.3,592.5 242.7,596.6" fill="#3f8cc0" stroke="#0d1a24" stroke-width="0.6" stroke-linejoin="round"/>
<polygon points="242.7,596.6 254.3,592.5 255.1,596.2 243.5,600.4" fill="#5ebdf5" stroke="#0d1a24" stroke-width="0.8" stroke-linejoin="round"/>
<polygon points="243.5,600.4 255.1,596.2 255.7,599.0 244.1,603.1" fill="#3f8cc0" stroke="#0d1a24" stroke-width="0.6" stroke-linejoin="round"/>
<polygon points="244.1,603.1 255.7,599.0 256.6,602.7 244.9,606.8" fill="#5ebdf5" stroke="#0d1a24" stroke-width="0.8" stroke-linejoin="round"/>
<polygon points="244.9,606.8 256.6,602.7 257.2,605.5 245.5,609.5" fill="#3f8cc0" stroke="#0d1a24" stroke-width="0.6" stroke-linejoin="round"/>
<polygon points="245.5,609.5 257.2,605.5 258.1,609.2 246.3,613.3" fill="#5ebdf5" stroke="#0d1a24" stroke-width="0.8" stroke-linejoin="round"/>
<polygon points="246.3,613.3 258.1,609.2 258.7,611.9 246.9,616.0" fill="#3f8cc0" stroke="#0d1a24" stroke-width="0.6" stroke-linejoin="round"/>
<polygon points="246.9,616.0 258.7,611.9 259.6,615.7 247.7,619.8" fill="#5ebdf5" stroke="#0d1a24" stroke-width="0.8" stroke-linejoin="round"/>
<polygon points="247.7,619.8 259.6,615.7 260.2,618.4 248.3,622.5" fill="#3f8cc0" stroke="#0d1a24" stroke-width="0.6" stroke-linejoin="round"/>
<polygon points="248.3,622.5 260.2,618.4 261.1,622.2 249.1,626.2" fill="#5ebdf5" stroke="#0d1a24" stroke-width="0.8" stroke-linejoin="round"/>
<polygon points="249.1,626.2 261.1,622.2 261.7,624.9 249.7,629.0" fill="#3f8cc0" stroke="#0d1a24" stroke-width="0.6" stroke-linejoin="round"/>
<polygon points="249.7,629.0 261.7,624.9 262.5,628.7 250.5,632.7" fill="#5ebdf5" stroke="#0d1a24" stroke-width="0.8" stroke-linejoin="round"/>
<polygon points="250.5,632.7 262.5,628.7 263.2,631.4 251.1,635.4" fill="#3f8cc0" stroke="#0d1a24" stroke-width="0.6" stroke-linejoin="round"/>
<polygon points="239.6,472.0 251.3,466.8 284.6,595.9 270.9,600.7" fill="#24506c" stroke="#0d1a24" stroke-width="0.9" stroke-linejoin="round"/>
<polygon points="239.6,472.0 249.0,467.8 249.9,471.6 240.5,475.7" fill="#5ebdf5" stroke="#0d1a24" stroke-width="0.8" stroke-linejoin="round"/>
<polygon points="240.5,475.7 249.9,471.6 250.6,474.3 241.2,478.4" fill="#3f8cc0" stroke="#0d1a24" stroke-width="0.6" stroke-linejoin="round"/>
<polygon points="241.2,478.4 250.6,474.3 251.6,478.0 242.1,482.1" fill="#5ebdf5" stroke="#0d1a24" stroke-width="0.8" stroke-linejoin="round"/>
<polygon points="242.1,482.1 251.6,478.0 252.3,480.7 242.7,484.9" fill="#3f8cc0" stroke="#0d1a24" stroke-width="0.6" stroke-linejoin="round"/>
<polygon points="242.7,484.9 252.3,480.7 253.2,484.5 243.7,488.6" fill="#5ebdf5" stroke="#0d1a24" stroke-width="0.8" stroke-linejoin="round"/>
<polygon points="243.7,488.6 253.2,484.5 253.9,487.2 244.3,491.3" fill="#3f8cc0" stroke="#0d1a24" stroke-width="0.6" stroke-linejoin="round"/>
<polygon points="244.3,491.3 253.9,487.2 254.9,490.9 245.2,495.0" fill="#5ebdf5" stroke="#0d1a24" stroke-width="0.8" stroke-linejoin="round"/>
<polygon points="245.2,495.0 254.9,490.9 255.6,493.6 245.9,497.7" fill="#3f8cc0" stroke="#0d1a24" stroke-width="0.6" stroke-linejoin="round"/>
<polygon points="245.9,497.7 255.6,493.6 256.5,497.4 246.8,501.5" fill="#5ebdf5" stroke="#0d1a24" stroke-width="0.8" stroke-linejoin="round"/>
<polygon points="246.8,501.5 256.5,497.4 257.2,500.1 247.4,504.2" fill="#3f8cc0" stroke="#0d1a24" stroke-width="0.6" stroke-linejoin="round"/>
<polygon points="247.4,504.2 257.2,500.1 258.2,503.8 248.3,507.9" fill="#5ebdf5" stroke="#0d1a24" stroke-width="0.8" stroke-linejoin="round"/>
<polygon points="248.3,507.9 258.2,503.8 258.8,506.5 249.0,510.6" fill="#3f8cc0" stroke="#0d1a24" stroke-width="0.6" stroke-linejoin="round"/>
<polygon points="249.0,510.6 258.8,506.5 259.8,510.3 249.9,514.3" fill="#5ebdf5" stroke="#0d1a24" stroke-width="0.8" stroke-linejoin="round"/>
<polygon points="249.9,514.3 259.8,510.3 260.5,513.0 250.6,517.0" fill="#3f8cc0" stroke="#0d1a24" stroke-width="0.6" stroke-linejoin="round"/>
<polygon points="250.6,517.0 260.5,513.0 261.4,516.7 251.5,520.8" fill="#5ebdf5" stroke="#0d1a24" stroke-width="0.8" stroke-linejoin="round"/>
<polygon points="251.5,520.8 261.4,516.7 262.1,519.4 252.1,523.5" fill="#3f8cc0" stroke="#0d1a24" stroke-width="0.6" stroke-linejoin="round"/>
<polygon points="252.1,523.5 262.1,519.4 263.1,523.2 253.0,527.2" fill="#5ebdf5" stroke="#0d1a24" stroke-width="0.8" stroke-linejoin="round"/>
<polygon points="253.0,527.2 263.1,523.2 263.8,525.9 253.7,529.9" fill="#3f8cc0" stroke="#0d1a24" stroke-width="0.6" stroke-linejoin="round"/>
<polygon points="253.7,529.9 263.8,525.9 264.7,529.6 254.6,533.6" fill="#5ebdf5" stroke="#0d1a24" stroke-width="0.8" stroke-linejoin="round"/>
<polygon points="254.6,533.6 264.7,529.6 265.4,532.3 255.3,536.3" fill="#3f8cc0" stroke="#0d1a24" stroke-width="0.6" stroke-linejoin="round"/>
<polygon points="255.3,536.3 265.4,532.3 266.4,536.1 256.2,540.1" fill="#5ebdf5" stroke="#0d1a24" stroke-width="0.8" stroke-linejoin="round"/>
<polygon points="256.2,540.1 266.4,536.1 267.1,538.8 256.8,542.8" fill="#3f8cc0" stroke="#0d1a24" stroke-width="0.6" stroke-linejoin="round"/>
<polygon points="256.8,542.8 267.1,538.8 268.0,542.5 257.7,546.5" fill="#5ebdf5" stroke="#0d1a24" stroke-width="0.8" stroke-linejoin="round"/>
<polygon points="257.7,546.5 268.0,542.5 268.7,545.2 258.4,549.2" fill="#3f8cc0" stroke="#0d1a24" stroke-width="0.6" stroke-linejoin="round"/>
<polygon points="258.4,549.2 268.7,545.2 269.7,549.0 259.3,552.9" fill="#5ebdf5" stroke="#0d1a24" stroke-width="0.8" stroke-linejoin="round"/>
<polygon points="259.3,552.9 269.7,549.0 270.3,551.7 260.0,555.6" fill="#3f8cc0" stroke="#0d1a24" stroke-width="0.6" stroke-linejoin="round"/>
<polygon points="260.0,555.6 270.3,551.7 271.3,555.4 260.9,559.4" fill="#5ebdf5" stroke="#0d1a24" stroke-width="0.8" stroke-linejoin="round"/>
<polygon points="260.9,559.4 271.3,555.4 272.0,558.2 261.5,562.1" fill="#3f8cc0" stroke="#0d1a24" stroke-width="0.6" stroke-linejoin="round"/>
<polygon points="261.5,562.1 272.0,558.2 272.9,561.9 262.4,565.8" fill="#5ebdf5" stroke="#0d1a24" stroke-width="0.8" stroke-linejoin="round"/>
<polygon points="262.4,565.8 272.9,561.9 273.6,564.6 263.1,568.5" fill="#3f8cc0" stroke="#0d1a24" stroke-width="0.6" stroke-linejoin="round"/>
<polygon points="263.1,568.5 273.6,564.6 274.6,568.3 264.0,572.2" fill="#5ebdf5" stroke="#0d1a24" stroke-width="0.8" stroke-linejoin="round"/>
<polygon points="264.0,572.2 274.6,568.3 275.3,571.1 264.6,574.9" fill="#3f8cc0" stroke="#0d1a24" stroke-width="0.6" stroke-linejoin="round"/>
<polygon points="264.6,574.9 275.3,571.1 276.2,574.8 265.6,578.7" fill="#5ebdf5" stroke="#0d1a24" stroke-width="0.8" stroke-linejoin="round"/>
<polygon points="265.6,578.7 276.2,574.8 276.9,577.5 266.2,581.4" fill="#3f8cc0" stroke="#0d1a24" stroke-width="0.6" stroke-linejoin="round"/>
<polygon points="266.2,581.4 276.9,577.5 277.9,581.3 267.1,585.1" fill="#5ebdf5" stroke="#0d1a24" stroke-width="0.8" stroke-linejoin="round"/>
<polygon points="267.1,585.1 277.9,581.3 278.6,584.0 267.8,587.8" fill="#3f8cc0" stroke="#0d1a24" stroke-width="0.6" stroke-linejoin="round"/>
<polygon points="267.8,587.8 278.6,584.0 279.5,587.7 268.7,591.5" fill="#5ebdf5" stroke="#0d1a24" stroke-width="0.8" stroke-linejoin="round"/>
<polygon points="268.7,591.5 279.5,587.7 280.2,590.4 269.3,594.3" fill="#3f8cc0" stroke="#0d1a24" stroke-width="0.6" stroke-linejoin="round"/>
<polygon points="269.3,594.3 280.2,590.4 281.2,594.2 270.2,598.0" fill="#5ebdf5" stroke="#0d1a24" stroke-width="0.8" stroke-linejoin="round"/>
<polygon points="270.2,598.0 281.2,594.2 281.8,596.9 270.9,600.7" fill="#3f8cc0" stroke="#0d1a24" stroke-width="0.6" stroke-linejoin="round"/>
<polygon points="176.2,541.9 184.1,538.6 190.6,577.8 182.3,580.9" fill="#5ebdf5" stroke="#0d1a24" stroke-width="0.8" stroke-linejoin="round"/>
<polygon points="209.3,577.1 234.4,567.6 236.1,575.2 210.7,584.7" fill="#5ebdf5" stroke="#0d1a24" stroke-width="0.8" stroke-linejoin="round"/>
<polygon points="210.7,584.7 236.1,575.2 237.0,579.8 211.5,589.2" fill="#3f8cc0" stroke="#0d1a24" stroke-width="0.6" stroke-linejoin="round"/>
<polygon points="416.7,615.2 550.0,560.0 551.7,565.2 417.7,621.5" fill="#2b5a7a" stroke="#0d1a24" stroke-width="0.8" stroke-linejoin="round"/>
<polygon points="361.5,467.3 360.0,470.4 416.2,620.8 416.7,615.2" fill="#2b5a7a" stroke="#0d1a24" stroke-width="0.6" stroke-linejoin="round"/>
<path d="M361.5,467.3 L477.1,422.5 L550.0,560.0 L416.7,615.2 Z M385.4,475.0 L396.9,470.8 L393.8,460.0 L443.8,440.2 L486.5,525.6 L429.2,551.7 L424.6,538.8 L411.5,543.3 Z M417.7,558.3 L491.7,524.6 L504.2,573.5 L434.4,601.2 Z M450.0,437.1 L463.5,432.9 L465.6,443.3 L452.1,447.5 Z M455.2,449.6 L468.8,445.4 L483.3,482.9 L470.8,487.1 Z M472.9,487.1 L485.4,482.9 L502.1,520.4 L488.5,524.6 Z M493.8,529.8 L505.2,526.7 L510.4,535.0 L496.9,540.2 Z M475.0,538.1 L483.3,535.0 L486.5,543.3 L478.1,546.5 Z " fill="#62c4fc" fill-rule="evenodd" stroke="#0d1a24" stroke-width="0.8" stroke-linejoin="round"/>
<polygon points="393.8,460.0 443.8,440.2 444.2,443.1 394.2,462.9" fill="#24506c" stroke="#0d1a24" stroke-width="0.6" stroke-linejoin="round"/>
<polygon points="385.4,475.0 396.9,470.8 397.2,472.9 385.7,477.1" fill="#24506c" stroke="#0d1a24" stroke-width="0.6" stroke-linejoin="round"/>
<polygon points="417.7,558.3 491.7,524.6 492.1,527.5 418.1,561.2" fill="#24506c" stroke="#0d1a24" stroke-width="0.6" stroke-linejoin="round"/>
<polygon points="450.0,437.1 463.5,432.9 463.9,435.0 450.3,439.2" fill="#24506c" stroke="#0d1a24" stroke-width="0.6" stroke-linejoin="round"/>
<polygon points="455.2,449.6 468.8,445.4 469.1,447.5 455.5,451.7" fill="#24506c" stroke="#0d1a24" stroke-width="0.6" stroke-linejoin="round"/>
<polygon points="472.9,487.1 485.4,482.9 485.7,485.0 473.2,489.2" fill="#24506c" stroke="#0d1a24" stroke-width="0.6" stroke-linejoin="round"/>
<polygon points="493.8,529.8 505.2,526.7 505.5,528.3 494.0,531.5" fill="#24506c" stroke="#0d1a24" stroke-width="0.6" stroke-linejoin="round"/>
<polygon points="419.8,569.4 495.8,536.0 497.1,541.2 421.9,575.0" fill="#62c4fc" stroke="#0d1a24" stroke-width="0.6" stroke-linejoin="round"/>
<polygon points="421.9,575.0 497.1,541.2 497.5,544.4 422.9,577.7" fill="#24506c" stroke="#0d1a24" stroke-width="0.6" stroke-linejoin="round"/>
<polyline points="463.5,430.8 531.2,568.3" fill="none" stroke="#0d1a24" stroke-width="0.8"/>
<polyline points="475.0,424.6 547.9,560.4" fill="none" stroke="#0d1a24" stroke-width="0.6"/>
<polyline points="478.1,423.5 550.4,561.0" fill="none" stroke="#0d1a24" stroke-width="0.5"/>
<polyline points="508.3,518.3 517.7,515.2" fill="none" stroke="#0d1a24" stroke-width="0.6"/>
<polyline points="463.5,430.8 475.0,425.0" fill="none" stroke="#0d1a24" stroke-width="0.6"/>
<polyline points="418.8,613.1 545.8,558.3" fill="none" stroke="#ffffff" stroke-width="0.6"/>
<polygon points="1535.5,401.6 1557.0,396.5 1555.9,406.1 1539.4,413.0 1535.5,408.4" fill="#2b5470" stroke="#0d1a24" stroke-width="0.8" stroke-linejoin="round"/>
<polygon points="1557.0,396.5 1716.1,484.5 1696.8,489.7 1555.9,406.1" fill="#376b8f" stroke="#0d1a24" stroke-width="0.8" stroke-linejoin="round"/>
<polygon points="1535.5,399.3 1583.2,386.2 1591.1,390.2 1610.5,384.5 1636.6,385.1 1649.1,404.4 1676.4,399.3 1686.6,404.4 1686.0,407.3 1636.6,419.8 1717.1,461.9 1716.1,484.0 1557.0,396.5 1535.5,401.6" fill="#5ebdf5" stroke="#0d1a24" stroke-width="0.8" stroke-linejoin="round"/>
<polyline points="1557.0,396.5 1583.2,386.2" fill="none" stroke="#0d1a24" stroke-width="0.7"/>
<polyline points="1583.2,386.2 1619.5,407.3" fill="none" stroke="#0d1a24" stroke-width="0.8"/>
<polygon points="1600.2,413.0 1619.5,407.8 1620.7,411.8 1609.3,416.4" fill="#2b5470" stroke="#0d1a24" stroke-width="0.7" stroke-linejoin="round"/>
<polygon points="1624.1,418.6 1674.1,405.2 1676.4,408.4 1636.6,419.8" fill="#2b5470" stroke="#0d1a24" stroke-width="0.7" stroke-linejoin="round"/>
<polygon points="1626.4,418.6 1674.7,405.9 1675.5,407.3 1635.5,419.2" fill="#5ebdf5" stroke="#0d1a24" stroke-width="0.5" stroke-linejoin="round"/>
<polyline points="1624.1,424.3 1699.2,468.5 1717.1,462.2" fill="none" stroke="#0d1a24" stroke-width="0.7"/>
<polyline points="1629.8,423.4 1705.2,463.2 1717.1,461.2" fill="none" stroke="#0d1a24" stroke-width="0.6"/>
<polygon points="1675.2,406.3 1686.6,404.5 1770.3,447.7 1757.0,450.7" fill="#5ebdf5" stroke="#0d1a24" stroke-width="0.7" stroke-linejoin="round"/>
<polygon points="1675.2,406.3 1757.0,450.7 1757.0,454.4 1674.7,409.6" fill="#376b8f" stroke="#0d1a24" stroke-width="0.7" stroke-linejoin="round"/>
<polygon points="1717.0,461.9 1750.2,452.5 1755.6,451.9 1757.0,448.6 1781.6,439.4 1772.0,475.1 1778.6,478.4 1806.8,473.4 1770.0,481.1 1755.6,485.7 1757.9,475.7 1697.9,489.7 1716.8,484.0" fill="#5ebdf5" stroke="#0d1a24" stroke-width="0.8" stroke-linejoin="round"/>
<polygon points="1755.6,485.7 1806.8,473.4 1806.8,475.1 1755.6,487.3" fill="#2b5470" stroke="#0d1a24" stroke-width="0.6" stroke-linejoin="round"/>
<polyline points="1757.9,475.7 1730.4,460.8" fill="none" stroke="#0d1a24" stroke-width="0.7"/>
<polyline points="1717.0,461.9 1750.2,452.5" fill="none" stroke="#0d1a24" stroke-width="0.7"/>
<polygon points="1757.0,448.6 1768.6,446.1 1770.3,449.4 1758.7,451.1" fill="#5ebdf5" stroke="#0d1a24" stroke-width="0.6" stroke-linejoin="round"/>
<polygon points="1701.2,493.0 1757.9,475.7 1755.6,485.7 1701.9,505.6" fill="#2b5470" stroke="#0d1a24" stroke-width="0.8" stroke-linejoin="round"/>
<polygon points="1695.9,490.3 1697.9,489.7 1701.2,493.0 1701.9,505.6 1699.9,505.2 1694.2,499.6" fill="#376b8f" stroke="#0d1a24" stroke-width="0.7" stroke-linejoin="round"/>
<polyline points="1701.2,493.0 1701.9,505.6" fill="none" stroke="#0d1a24" stroke-width="0.7"/>
<polygon points="1617.2,353.9 1627.1,359.9 1625.3,385.4 1615.3,386.7 1610.0,384.6" fill="#376b8f" stroke="#0d1a24" stroke-width="0.8" stroke-linejoin="round"/>
<polygon points="1627.1,359.9 1651.8,353.6 1649.6,372.0 1645.2,374.6 1644.2,381.9 1625.3,385.4" fill="#2b5470" stroke="#0d1a24" stroke-width="0.8" stroke-linejoin="round"/>
<polygon points="1617.2,353.9 1640.7,348.6 1651.8,353.6 1627.1,359.9" fill="#5ebdf5" stroke="#0d1a24" stroke-width="0.8" stroke-linejoin="round"/>
<polygon points="1636.1,383.6 1652.3,392.7 1649.6,405.3 1637.9,398.0" fill="#376b8f" stroke="#0d1a24" stroke-width="0.8" stroke-linejoin="round"/>
<polygon points="1652.3,392.7 1679.8,385.4 1677.5,398.0 1649.6,405.3" fill="#2b5470" stroke="#0d1a24" stroke-width="0.8" stroke-linejoin="round"/>
<polygon points="1636.1,383.6 1662.2,376.0 1679.8,385.4 1652.3,392.7" fill="#5ebdf5" stroke="#0d1a24" stroke-width="0.8" stroke-linejoin="round"/>
<polygon points="1781.6,439.4 1790.2,442.8 1778.6,478.4 1772.0,475.1" fill="#376b8f" stroke="#0d1a24" stroke-width="0.8" stroke-linejoin="round"/>
<polygon points="1790.2,442.8 1815.9,436.1 1806.8,474.3 1778.6,478.4" fill="#2b5470" stroke="#0d1a24" stroke-width="0.8" stroke-linejoin="round"/>
<polygon points="1781.6,439.4 1806.8,431.5 1815.9,436.1 1790.2,442.8" fill="#5ebdf5" stroke="#0d1a24" stroke-width="0.8" stroke-linejoin="round"/>
<circle cx="1798.2" cy="469.6" r="0.8" fill="#0d1a24"/>
<circle cx="1669.9" cy="396.7" r="1.0" fill="#0d1a24"/>
</svg>
<svg class="abs" style="left:1700px;top:0" width="212" height="957" viewBox="1700 91 212 957">
<defs>
    <linearGradient id="cubeF" x1="0" y1="0" x2="0" y2="1"><stop offset="0" stop-color="#fafafa"/><stop offset="1" stop-color="#d6d6d6"/></linearGradient>
    <linearGradient id="cubeL" x1="0" y1="0" x2="0" y2="1"><stop offset="0" stop-color="#f4f4f4"/><stop offset="1" stop-color="#d0d0d0"/></linearGradient>
    <filter id="cs" x="-50%" y="-50%" width="200%" height="200%"><feGaussianBlur stdDeviation="4"/></filter>
    </defs>
<ellipse cx="1862" cy="178" rx="30" ry="10" fill="#000" opacity="0.12" filter="url(#cs)"/>
<polygon points="1825.6,119.9 1845,142.1 1846.5,184.3 1829.4,158.7" fill="url(#cubeL)" stroke="#bbb" stroke-width="0.7"/>
<polygon points="1845,142.1 1893.3,129.4 1890,168.2 1846.5,184.3" fill="url(#cubeF)" stroke="#bbb" stroke-width="0.7"/>
<polygon points="1825.6,119.9 1868.7,110.4 1893.3,129.4 1845,142.1" fill="#f2f2f2" stroke="#bbb" stroke-width="0.7"/>
<polygon points="1841.2,137.9 1850.7,135 1854.5,140.7 1854.5,147.3 1845.5,149.7 1841.2,141.7" fill="#b5e1f2"/>
<path d="M1852.6 120.4 L1859.5 128 M1858.8 124.6 L1866.8 122.3 M1848.4 130.3 L1873.4 124.6" fill="none" stroke="#111" stroke-width="1.1"/>
<path d="M1855.5 155 L1882.5 148 M1860 151.5 L1861.5 153.5 M1877 147 L1875 150 M1858 158.5 V168.5 M1858 158.5 L1866 156.5 V165 L1864 165.5 M1858.5 161.5 L1865.5 159.5 M1858.5 164.5 L1865.5 162.5 M1872 155 V162.5 M1878 152.5 V165 L1876 165.5" fill="none" stroke="#111" stroke-width="1.1"/>
<path d="M1831 139.5 L1841 154.5 M1832 146 L1836 141 M1834.5 148 L1834 160 M1836 150.5 L1840.5 149 M1837 150 L1838.5 157 M1836.5 157.5 L1841.5 156" fill="none" stroke="#111" stroke-width="1"/>
<rect x="1853.2" y="210.2" width="35.8" height="387.8" fill="#efefef" stroke="#c8c8c8" stroke-width="2"/>
<line x1="1858" y1="322.5" x2="1884" y2="322.5" stroke="#999" stroke-width="1" opacity="0.8"/>
<line x1="1858" y1="506" x2="1884" y2="506" stroke="#999" stroke-width="1" opacity="0.8"/>
<path d="M1871 221 V241.5 M1861 231 H1881.5" stroke="#2b2b2b" stroke-width="1.3"/><polygon points="1868.5,224 1871,220.5 1873.5,224" fill="#2b2b2b"/><polygon points="1868.5,238.5 1871,242 1873.5,238.5" fill="#2b2b2b"/><polygon points="1864,228.5 1860.5,231 1864,233.5" fill="#2b2b2b"/><polygon points="1878.5,228.5 1882,231 1878.5,233.5" fill="#2b2b2b"/>
<polygon points="1865.0,263.0 1870.5,265.9 1870.5,272.5 1865.0,269.5" fill="#666" stroke="#2b2b2b" stroke-width="0.9" stroke-linejoin="round"/><polygon points="1870.5,265.9 1876.0,263.0 1876.0,269.5 1870.5,272.5" fill="#2b2b2b" stroke="#2b2b2b" stroke-width="0.9" stroke-linejoin="round"/><polygon points="1865.0,263.0 1870.5,260.0 1876.0,263.0 1870.5,265.9" fill="#fff" stroke="#2b2b2b" stroke-width="0.9" stroke-linejoin="round"/>
<path d="M1874 256 A9 9 0 0 1 1879.5 268 M1862 276 A9 9 0 0 1 1861.5 264" fill="none" stroke="#2b2b2b" stroke-width="1.2"/><polygon points="1871.5,254.5 1875.5,253.5 1874.5,257.5" fill="#2b2b2b"/><polygon points="1864,277.5 1860,278 1861,274" fill="#2b2b2b"/>
<circle cx="1869.5" cy="299.5" r="5.8" fill="#fff" stroke="#2b2b2b" stroke-width="1.4"/><line x1="1873.5" y1="303.5" x2="1879" y2="309" stroke="#2b2b2b" stroke-width="3"/>
<path d="M1861 340 V335 H1866 M1876 335 H1881 V340 M1881 350 V355 H1876 M1866 355 H1861 V350" fill="none" stroke="#2b2b2b" stroke-width="1.3"/>
<polygon points="1865.5,341.5 1871.0,344.4 1871.0,351.5 1865.5,348.5" fill="#666" stroke="#2b2b2b" stroke-width="0.9" stroke-linejoin="round"/><polygon points="1871.0,344.4 1876.5,341.5 1876.5,348.5 1871.0,351.5" fill="#2b2b2b" stroke="#2b2b2b" stroke-width="0.9" stroke-linejoin="round"/><polygon points="1865.5,341.5 1871.0,338.5 1876.5,341.5 1871.0,344.4" fill="#fff" stroke="#2b2b2b" stroke-width="0.9" stroke-linejoin="round"/>
<circle cx="1876.5" cy="375.5" r="5.6" fill="#fff" stroke="#2b2b2b" stroke-width="1"/>
<polygon points="1860.0,376.9 1867.2,380.8 1867.2,389.0 1860.0,385.1" fill="#555" stroke="#2b2b2b" stroke-width="0.9" stroke-linejoin="round"/><polygon points="1867.2,380.8 1874.5,376.9 1874.5,385.1 1867.2,389.0" fill="#333" stroke="#2b2b2b" stroke-width="0.9" stroke-linejoin="round"/><polygon points="1860.0,376.9 1867.2,373.0 1874.5,376.9 1867.2,380.8" fill="#fff" stroke="#2b2b2b" stroke-width="0.9" stroke-linejoin="round"/>
<path d="M1860.5 414 Q1871 403.5 1881.5 414 Q1871 424.5 1860.5 414 Z" fill="#fff" stroke="#2b2b2b" stroke-width="1.3"/><circle cx="1871" cy="414" r="3.6" fill="#555"/>
<path d="M1860.5 443 H1871 L1875.5 456 H1863.5 Z M1861.5 447.5 H1872.5 M1862.5 451.5 H1874 M1864 443 L1866.5 456 M1867.5 443 L1870 456" fill="#fff" stroke="#2b2b2b" stroke-width="1"/>
<path d="M1866 446 Q1874 438 1882 446 Q1874 454 1866 446 Z" fill="#fff" stroke="#2b2b2b" stroke-width="1.1"/><circle cx="1874" cy="446" r="2.8" fill="#555"/>
<rect x="1861" y="478.5" width="20" height="13.5" rx="1" fill="#3a3a3a"/><rect x="1866" y="476" width="8" height="3.5" fill="#3a3a3a"/><circle cx="1871" cy="485.5" r="4.6" fill="#fff"/><circle cx="1871" cy="485.5" r="3" fill="#3a3a3a"/><rect x="1878" y="480.5" width="1.8" height="1.8" fill="#fff"/>
<polygon points="1860.0,527.3 1868.0,531.6 1868.0,540.0 1860.0,535.7" fill="#666" stroke="#2b2b2b" stroke-width="0.9" stroke-linejoin="round"/><polygon points="1868.0,531.6 1876.0,527.3 1876.0,535.7 1868.0,540.0" fill="#333" stroke="#2b2b2b" stroke-width="0.9" stroke-linejoin="round"/><polygon points="1860.0,527.3 1868.0,523.0 1876.0,527.3 1868.0,531.6" fill="#fff" stroke="#2b2b2b" stroke-width="0.9" stroke-linejoin="round"/>
<path d="M1873 527 L1877 521 A3 3 0 0 1 1882 524 L1878 530" fill="none" stroke="#2b2b2b" stroke-width="1.6"/>
<rect x="1860" y="517" width="2" height="2" fill="#2b2b2b"/>
<rect x="1860" y="538" width="2" height="2" fill="#2b2b2b"/>
<rect x="1879" y="538" width="2" height="2" fill="#2b2b2b"/>
<circle cx="1863.5" cy="557" r="2.8" fill="#444"/><path d="M1863 560 Q1862 570 1872 576 H1881" fill="none" stroke="#2b2b2b" stroke-width="0.9" stroke-dasharray="1,1"/>
<path d="M1868 571 L1876 562 A3.5 3.5 0 0 1 1881 567 L1873 576" fill="none" stroke="#2b2b2b" stroke-width="2.4"/><line x1="1864" y1="578" x2="1882" y2="559" stroke="#2b2b2b" stroke-width="1.5"/>
<rect x="1741" y="968" width="155" height="21.7" fill="#c8c8c8"/>
<rect x="1742" y="996" width="73" height="20" fill="#fff" stroke="#c8c8c8" stroke-width="2"/>
<rect x="1822" y="996" width="73" height="20" fill="#fff" stroke="#c8c8c8" stroke-width="2"/>
<path d="M1780 974 L1778.5 977 M1780 975 H1784 Q1783 981 1779 984.5 M1786 973 L1787 974.5 M1788 972.5 L1789 974 M1790 974 V978.5 M1794 973.5 V979 Q1794 983 1790.5 985 M1797 977 L1798 979.5 M1800 977 L1801 979 M1802.5 976.5 Q1802 982 1799 984 M1806 973 V985 M1806.5 976.5 L1810 978.5 M1808.5 973 L1809.5 975 M1811 972.5 L1812 974 M1815 973 L1816 975 M1813 977 H1820 L1815 981 Q1813 984 1821 984 M1823 973 L1825.5 977 L1823.5 980.5 L1826 983 M1822.5 984.5 L1826.5 981 M1827 974 H1833 M1827.5 976.5 H1833 V979 H1827.5 Z M1827.5 980.5 H1833 V985 H1827.5 Z M1830 980.5 V985 M1839 972.5 L1837 976.5 M1838.5 976 V979.5 M1838.5 974.5 H1848 M1842 973 V979.5 M1838.5 977 H1847 M1838.5 979.5 H1848 M1836 981.5 H1850 M1843 979.5 V985.5 M1842.5 982 L1837 985.5 M1843.5 982 L1849 985.5" fill="none" stroke="#111" stroke-width="1.6"/>
<path d="M1779 1002.5 L1776.5 1004 M1779 1001 V1011.5" fill="none" stroke="#141a3a" stroke-width="2"/>
<path d="M1859 1002.5 L1856.5 1004 M1859 1001 V1011.5" fill="none" stroke="#141a3a" stroke-width="2"/>
<path d="M1757 1024 H1763 M1757 1026 H1763 M1757 1024 V1030 M1756 1028 H1764 M1759 1028 L1763 1032 M1758 1030 L1756 1032 M1766 1024 L1770 1025 M1765 1027 L1772 1026 M1767 1031 H1771 M1774 1024 H1779 L1774 1032 M1776 1029 L1779 1032 M1781 1026 H1788 M1785 1024 V1029 Q1785 1031 1782 1032 M1790 1026.5 L1794 1026 Q1794 1029 1791 1031 M1796 1025 H1802 Q1801 1030 1797 1032" fill="none" stroke="#111" stroke-width="1.3"/>
<path d="M1837 1024 L1835.5 1026 M1837 1025 H1841 L1840 1027 M1836 1027 H1842 V1032 M1836 1027 V1032 M1836 1029 H1842 M1839 1027 V1032 M1846 1023.5 V1025 M1844 1025 H1851 M1844.5 1025 V1032 M1846 1027.5 H1850 M1846 1029.5 L1850 1032 M1850 1029 L1846 1032 M1854 1024 H1859 L1854 1032 M1856 1029 L1859 1032 M1861 1026 H1868 M1865 1024 V1029 Q1865 1031 1862 1032 M1870 1026.5 L1874 1026 Q1874 1029 1871 1031 M1876 1025 H1882 Q1881 1030 1877 1032" fill="none" stroke="#111" stroke-width="1.3"/>
</svg>
</div>
<div class="abs" id="strip"><div class="abs" style="left:0;top:423px;width:8px;height:150px;background:#0099cc"></div>
<svg class="abs" style="left:0;top:490px" width="8" height="12"><polygon points="1.5,6 7,2 7,10" fill="#fff"/></svg></div>
<div class="abs" id="taskbar">
  <div class="abs" style="left:48px;top:0;width:344px;height:8px;background:#f0f0f0;border-top:1px solid #999"></div>
  <div class="abs" style="left:687px;top:0;width:48px;height:8px;background:#9a5520"></div>
  <div class="abs" style="left:883px;top:0;width:48px;height:8px;background:#9a5520"></div>
  <div class="abs" style="left:931px;top:0;width:49px;height:8px;background:#333"></div>
</div>
</body></html>
